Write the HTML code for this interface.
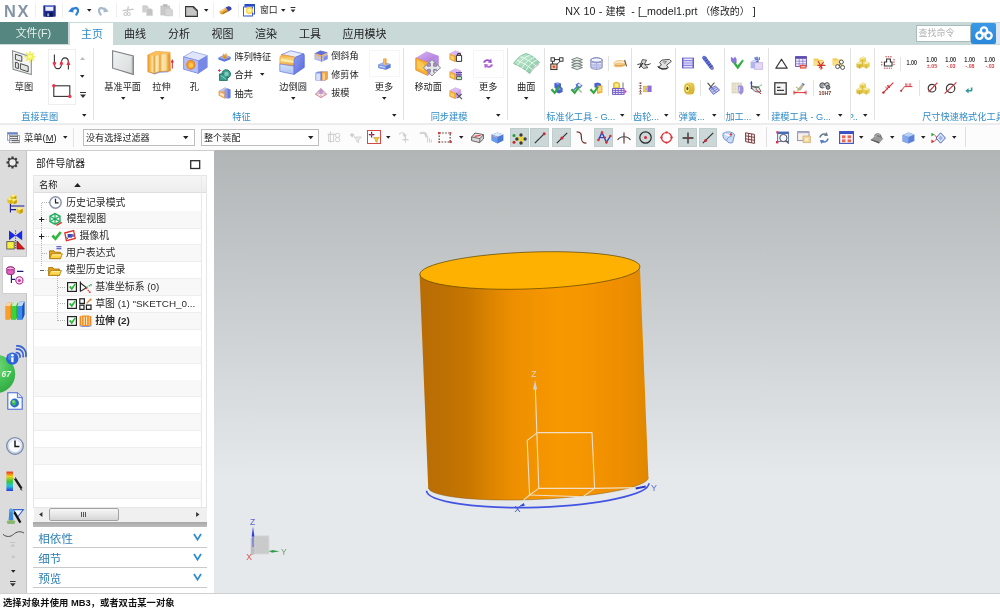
<!DOCTYPE html>
<html lang="zh"><head><meta charset="utf-8"><title>NX 10 - 建模 - [_model1.prt （修改的）]</title>
<style>
html,body{margin:0;padding:0;background:#fff;}
body{width:1000px;height:610px;position:relative;overflow:hidden;font-family:"Liberation Sans","Noto Sans CJK SC",sans-serif;}
#app{position:absolute;left:0;top:0;width:1000px;height:610px;overflow:hidden;will-change:transform;}
#app div,#app span.t,#app svg.i{position:absolute;}
span.t{line-height:14px;height:14px;white-space:nowrap;}
svg{overflow:visible}
span.cj{font-size:9.85px;word-spacing:0}
</style></head><body><svg width="0" height="0" style="position:absolute"><defs>
<linearGradient id="gPl" x1="0" y1="0" x2="1" y2="1"><stop offset="0" stop-color="#f2f4f4"/><stop offset="1" stop-color="#d5dad9"/></linearGradient>
<linearGradient id="gOr" x1="0" y1="0" x2="1" y2="0"><stop offset="0" stop-color="#f09a22"/><stop offset="0.5" stop-color="#fbd080"/><stop offset="1" stop-color="#ee9a28"/></linearGradient>
<linearGradient id="gExt" x1="0" y1="0" x2="1" y2="0"><stop offset="0" stop-color="#f0a030"/><stop offset="0.1" stop-color="#f6b850"/><stop offset="0.2" stop-color="#fbe2a0"/><stop offset="0.28" stop-color="#f4b04a"/><stop offset="0.38" stop-color="#fbe8b4"/><stop offset="0.48" stop-color="#f8d68c"/><stop offset="0.54" stop-color="#f0a840"/><stop offset="0.64" stop-color="#fbe6b0"/><stop offset="0.8" stop-color="#f8da94"/><stop offset="0.9" stop-color="#f0a234"/><stop offset="1" stop-color="#e89428"/></linearGradient>
<linearGradient id="gBlend" x1="0" y1="0" x2="0" y2="1"><stop offset="0" stop-color="#f4a440"/><stop offset="0.3" stop-color="#f8cc6a"/><stop offset="0.55" stop-color="#f8d478"/><stop offset="1" stop-color="#ee9230"/></linearGradient>
<linearGradient id="gBl3" x1="0" y1="0" x2="0" y2="1"><stop offset="0" stop-color="#d4e2fa"/><stop offset="1" stop-color="#a9c0f2"/></linearGradient>
<linearGradient id="gOrV" x1="0" y1="0" x2="0" y2="1"><stop offset="0" stop-color="#fbc35c"/><stop offset="1" stop-color="#ee8f1e"/></linearGradient>
<linearGradient id="gBl" x1="0" y1="0" x2="0" y2="1"><stop offset="0" stop-color="#cfd8fb"/><stop offset="1" stop-color="#8e9ff0"/></linearGradient>
<linearGradient id="gBl2" x1="0" y1="0" x2="1" y2="1"><stop offset="0" stop-color="#8d9cf2"/><stop offset="1" stop-color="#5868dc"/></linearGradient>
<linearGradient id="gPu" x1="0" y1="0" x2="1" y2="1"><stop offset="0" stop-color="#dcb6f2"/><stop offset="1" stop-color="#a66fd8"/></linearGradient>
<linearGradient id="gGr" x1="0" y1="0" x2="1" y2="1"><stop offset="0" stop-color="#c9ecd6"/><stop offset="1" stop-color="#7fc7a0"/></linearGradient>
<linearGradient id="gYe" x1="0" y1="0" x2="1" y2="1"><stop offset="0" stop-color="#f6e27a"/><stop offset="1" stop-color="#cfa91e"/></linearGradient>
<radialGradient id="gBadge" cx="0.45" cy="0.3" r="0.75"><stop offset="0" stop-color="#7fdc82"/><stop offset="0.55" stop-color="#44c254"/><stop offset="1" stop-color="#2fa640"/></radialGradient>
<linearGradient id="gClk" x1="0" y1="0" x2="0" y2="1"><stop offset="0" stop-color="#f4f8ff"/><stop offset="1" stop-color="#b9c9e6"/></linearGradient>
<linearGradient id="gRain" x1="0" y1="0" x2="0" y2="1"><stop offset="0" stop-color="#e8301e"/><stop offset="0.25" stop-color="#f2d21e"/><stop offset="0.5" stop-color="#3cc43c"/><stop offset="0.75" stop-color="#28c0d8"/><stop offset="1" stop-color="#2838d8"/></linearGradient>
</defs></svg><div id="app">
<div style="left:0px;top:0px;width:1000px;height:22px;background:#fff"></div>
<span class="t lat" style="left:4px;top:4.4px;font-size:16.4px;color:#8494a6;font-weight:bold;letter-spacing:1.6px">NX</span>
<svg class="i" style="left:43.1px;top:4.5px" width="13" height="12" viewBox="0 0 13 12"><rect x="0.3" y="0.3" width="12.4" height="11.4" rx="0.8" fill="#1f2f93"/><rect x="2.4" y="0.6" width="8" height="5.2" fill="#eef1fb"/><rect x="2.4" y="0.6" width="8" height="1.4" fill="#5b6fd0"/><rect x="3.2" y="7.6" width="6.6" height="4.1" fill="#0e1550"/><rect x="4.2" y="8.4" width="2" height="2.8" fill="#8fb0e8"/></svg>
<svg class="i" style="left:68.0px;top:6.300000000000001px" width="11" height="9" viewBox="0 0 11 9"><path d="M4 4.2 C5.4 1.8 9.2 1 10 3.8 C10.4 5.6 9.6 7.2 8.4 8.6" fill="none" stroke="#2f7fd8" stroke-width="2.3" stroke-linecap="round"/><path d="M0.2 5.6 L4.4 1 L5.6 6.4 Z" fill="#2f7fd8"/></svg>
<svg class="i" style="left:98.0px;top:6.300000000000001px" width="11" height="9" viewBox="0 0 11 9"><path d="M7 4.2 C5.6 1.8 1.8 1 1 3.8 C0.6 5.6 1.4 7.2 2.6 8.6" fill="none" stroke="#a9b9cb" stroke-width="2.3" stroke-linecap="round"/><path d="M10.8 5.6 L6.6 1 L5.4 6.4 Z" fill="#a9b9cb"/></svg>
<svg class="i" style="left:121.8px;top:5.5px" width="12" height="10" viewBox="0 0 12 10"><path d="M0.5 4.6 L11.5 3.2 M6.4 0.3 L5.2 6.2" stroke="#c9c9c9" stroke-width="1.4" fill="none"/><circle cx="3.4" cy="8" r="1.5" fill="none" stroke="#c9c9c9" stroke-width="1.1"/><circle cx="6.8" cy="8" r="1.5" fill="none" stroke="#c9c9c9" stroke-width="1.1"/></svg>
<svg class="i" style="left:142.0px;top:5.0px" width="11" height="11" viewBox="0 0 11 11"><path d="M0.3 0.3 H5 L6.6 1.9 V7.6 H0.3 Z" fill="#cfcfcf"/><path d="M4.4 3.4 H9 L10.7 5.1 V10.7 H4.4 Z" fill="#c3c3c3" stroke="#e2e2e2" stroke-width="0.5"/></svg>
<svg class="i" style="left:160.0px;top:4.0px" width="13" height="12" viewBox="0 0 13 12"><rect x="0.4" y="1.4" width="9.6" height="10.2" rx="0.8" fill="#c9c9c9"/><rect x="3" y="0.2" width="4.4" height="2.4" fill="#b9b9b9"/><path d="M5 4.2 H10.6 L12.6 6.2 V11.8 H5 Z" fill="#d5d5d5" stroke="#bdbdbd" stroke-width="0.5"/></svg>
<svg class="i" style="left:185.0px;top:5.699999999999999px" width="13" height="11" viewBox="0 0 13 11"><path d="M0.6 0.6 H8.4 L12.4 4.6 V10.4 H0.6 Z" fill="#c5c5c5" stroke="#333" stroke-width="1.1"/><path d="M8.2 0.8 C8.6 2.6 10 4.2 12.2 4.6" fill="none" stroke="#333" stroke-width="0.9"/></svg>
<svg class="i" style="left:218.8px;top:5.9px" width="13" height="9" viewBox="0 0 13 9"><path d="M0.4 5.6 L6.6 1.4 L9.6 5.4 L3.6 8.4 C2 9 0.6 7.4 0.4 5.6 Z" fill="#e9a437"/><path d="M6.6 1.4 L9.4 0.2 C11.2 -0.2 12.8 1.6 12.6 3.2 L9.6 5.4 Z" fill="#3a41b6"/><path d="M1.4 5.8 L6.4 2.6" stroke="#fbe3a0" stroke-width="1"/><path d="M3.8 7.4 L8.6 4.8" stroke="#8a5a18" stroke-width="0.8"/></svg>
<svg class="i" style="left:243.3px;top:4.0px" width="12" height="13" viewBox="0 0 12 13"><rect x="2" y="0.5" width="9.5" height="9.5" fill="#fff" stroke="#2b4bc4" stroke-width="1"/><rect x="2" y="0.5" width="9.5" height="2" fill="#2b4bc4"/><rect x="0.5" y="3" width="9" height="9" fill="#fff" stroke="#3b5bd0" stroke-width="1"/><circle cx="6.4" cy="6.6" r="3.6" fill="#ffd94a"/><circle cx="6.4" cy="6.4" r="2" fill="#fff3a8"/><rect x="3" y="11.4" width="5" height="1.3" fill="#8aa0d8"/></svg>
<svg class="i" style="left:87.25px;top:9.15px" width="4.5" height="2.6999999999999997" viewBox="0 0 10 6"><path d="M0 0H10L5 6Z" fill="#222"/></svg>
<svg class="i" style="left:204.15px;top:8.65px" width="4.5" height="2.6999999999999997" viewBox="0 0 10 6"><path d="M0 0H10L5 6Z" fill="#222"/></svg>
<svg class="i" style="left:281.35px;top:8.950000000000001px" width="4.5" height="2.6999999999999997" viewBox="0 0 10 6"><path d="M0 0H10L5 6Z" fill="#222"/></svg>
<div style="left:34.5px;top:3px;width:1px;height:15px;background:#efefef"></div>
<div style="left:61.5px;top:3px;width:1px;height:15px;background:#efefef"></div>
<div style="left:115.5px;top:3px;width:1px;height:15px;background:#efefef"></div>
<div style="left:179px;top:3px;width:1px;height:15px;background:#efefef"></div>
<div style="left:212.6px;top:3px;width:1px;height:15px;background:#efefef"></div>
<div style="left:238px;top:3px;width:1px;height:15px;background:#efefef"></div>
<span class="t " style="left:260px;top:3.3000000000000007px;font-size:8.8px;color:#222;">窗口</span>
<svg class="i" style="left:290px;top:7.4px" width="6" height="5.6" viewBox="0 0 6 7"><path d="M0 0H6V1.2H0Z M0 3H6L3 6.8Z" fill="#333"/></svg>
<span class="t " style="left:565.3px;top:3.5999999999999996px;font-size:10.7px;color:#222;word-spacing:0.4px">NX 10 - <span class="cj">建模</span><span style="margin-left:2.4px"> - [_model1.prt</span><span class="cj"> （修改的）</span> ]</span>
<div style="left:0px;top:22px;width:1000px;height:23px;background:#c9d9d8"></div>
<div style="left:0px;top:22.3px;width:68px;height:22.2px;background:#55867f"></div>
<div style="left:69.6px;top:23.4px;width:43.6px;height:21.6px;background:#fff"></div>
<span class="t " style="left:-66.5px;width:200px;text-align:center;top:26.299999999999997px;font-size:10.8px;color:#e4f1ee;">文件(F)</span>
<span class="t " style="left:-8px;width:200px;text-align:center;top:26.5px;font-size:11px;color:#2e8bc9;">主页</span>
<span class="t " style="left:35px;width:200px;text-align:center;top:26.5px;font-size:11px;color:#222;">曲线</span>
<span class="t " style="left:79px;width:200px;text-align:center;top:26.5px;font-size:11px;color:#222;">分析</span>
<span class="t " style="left:122.5px;width:200px;text-align:center;top:26.5px;font-size:11px;color:#222;">视图</span>
<span class="t " style="left:166px;width:200px;text-align:center;top:26.5px;font-size:11px;color:#222;">渲染</span>
<span class="t " style="left:210px;width:200px;text-align:center;top:26.5px;font-size:11px;color:#222;">工具</span>
<span class="t " style="left:264.5px;width:200px;text-align:center;top:26.5px;font-size:11px;color:#222;">应用模块</span>
<div style="left:915.5px;top:24.5px;width:55px;height:17px;background:#fff;border:1px solid #a9bcbc;box-sizing:border-box"></div>
<span class="t " style="left:918.5px;top:26.1px;font-size:9px;color:#b2b2b2;">查找命令</span>
<div style="left:996px;top:22.6px;width:4px;height:21px;background:#dde8f4"></div>
<div style="left:970.5px;top:22.6px;width:25.5px;height:21px;background:linear-gradient(180deg,#3a98e8,#2a88dc);border-radius:2px"></div>
<svg class="i" style="left:975.0px;top:25.799999999999997px" width="18" height="14" viewBox="0 0 18 14"><g fill="none" stroke="#fff" stroke-width="2.3"><circle cx="9" cy="4.6" r="3.2"/><circle cx="4.5" cy="9.6" r="3.2"/><circle cx="13.5" cy="9.6" r="3.2"/></g></svg>
<div style="left:0px;top:45px;width:1000px;height:78px;background:#fff"></div>
<div style="left:0px;top:122.6px;width:1000px;height:2px;background:#ececec"></div>
<div style="left:93px;top:48px;width:1px;height:72px;background:#e2e2e2"></div>
<div style="left:403px;top:48px;width:1px;height:72px;background:#e2e2e2"></div>
<div style="left:507px;top:48px;width:1px;height:72px;background:#e2e2e2"></div>
<div style="left:544px;top:48px;width:1px;height:72px;background:#e2e2e2"></div>
<div style="left:631px;top:48px;width:1px;height:72px;background:#e2e2e2"></div>
<div style="left:675px;top:48px;width:1px;height:72px;background:#e2e2e2"></div>
<div style="left:723.5px;top:48px;width:1px;height:72px;background:#e2e2e2"></div>
<div style="left:767.5px;top:48px;width:1px;height:72px;background:#e2e2e2"></div>
<div style="left:849.5px;top:48px;width:1px;height:72px;background:#e2e2e2"></div>
<div style="left:874px;top:48px;width:1px;height:72px;background:#e2e2e2"></div>
<svg class="i" style="left:12.100000000000001px;top:49.9px" width="25" height="25" viewBox="0 0 25 25"><path d="M0.5 0.8 L19.3 7 L19.3 24.6 L1.1 19.4 Z" fill="#f3f4f4" stroke="#8a8f92" stroke-width="1.1"/><path d="M3.4 4.2 L9.8 6.2 L9.8 11.4 L3.4 9.6 Z" fill="#e6e8e8" stroke="#4a4a4a" stroke-width="1"/><path d="M3.4 12.2 L6.4 13.2 L6.4 18.6 L3.4 17.6 Z" fill="#e6e8e8" stroke="#4a4a4a" stroke-width="1"/><path d="M8.4 13.6 L16.2 16.2 L16.2 21.8 L8.4 19.2 Z" fill="#e2e6e2" stroke="#4a4a4a" stroke-width="1"/><g stroke="#f1ec4a" stroke-width="1.3"><path d="M18 1 V12.6 M12.4 6.8 H23.6 M14 2.8 L22 10.8 M22 2.8 L14 10.8"/></g><circle cx="18" cy="6.8" r="3.3" fill="#eef04a"/><circle cx="18" cy="6.8" r="1.7" fill="#fbfbb0"/></svg>
<span class="t " style="left:-76px;width:200px;text-align:center;top:79.7px;font-size:9.2px;color:#222;">草图</span>
<div style="left:48px;top:49px;width:28px;height:56px;background:#fff;border:1px solid #eceef2;box-sizing:border-box"></div>
<svg class="i" style="left:52.2px;top:53.7px" width="19" height="16" viewBox="0 0 19 16"><path d="M2.4 0.4 V9.4 C2.4 16.4 9.4 16.4 9.4 9.4 V8.4 C9.4 2.4 16.4 2.4 16.4 8.4 V15.6" fill="none" stroke="#333" stroke-width="1.1"/><g fill="#e8354a"><path d="M2.4 13 L0.4 8.6 H4.4 Z"/><path d="M9.4 6 L7.4 10.6 H11.4 Z"/><path d="M16.4 6.4 L14.4 11 H18.4 Z"/><circle cx="2.4" cy="9" r="1.3"/><circle cx="9.4" cy="9.6" r="1.3"/><circle cx="16.4" cy="10" r="1.3"/></g></svg>
<svg class="i" style="left:51.8px;top:83.8px" width="20" height="14" viewBox="0 0 20 14"><rect x="1.8" y="1.8" width="16" height="10.6" fill="none" stroke="#333" stroke-width="1.1"/><circle cx="1.8" cy="1.8" r="1.7" fill="#e8354a"/><circle cx="17.8" cy="12.4" r="1.7" fill="#e8354a"/></svg>
<svg class="i" style="left:80.2px;top:57px" width="5" height="3" viewBox="0 0 10 6"><path d="M0 6H10L5 0Z" fill="#bbb"/></svg>
<svg class="i" style="left:80.45px;top:74.95px" width="4.5" height="2.6999999999999997" viewBox="0 0 10 6"><path d="M0 0H10L5 6Z" fill="#222"/></svg>
<svg class="i" style="left:79.8px;top:91.5px" width="6" height="6" viewBox="0 0 6 6"><path d="M0 0H6V1H0Z M0 2.5H6L3 6Z" fill="#333"/></svg>
<span class="t " style="left:-60.3px;width:200px;text-align:center;top:109.7px;font-size:9.2px;color:#2e8bc9;">直接草图</span>
<svg class="i" style="left:81.75px;top:114.25px" width="4.5" height="2.6999999999999997" viewBox="0 0 10 6"><path d="M0 0H10L5 6Z" fill="#222"/></svg>
<svg class="i" style="left:112.4px;top:50.4px" width="22" height="25" viewBox="0 0 22 25"><path d="M0.6 0.8 L21.4 6 L21.4 24.4 L0.6 18.2 Z" fill="url(#gPl)" stroke="#7d8284" stroke-width="1.1"/><path d="M20.4 6.6 V23" stroke="#a8adaf" stroke-width="1.4"/></svg>
<span class="t " style="left:22.700000000000003px;width:200px;text-align:center;top:79.7px;font-size:9.2px;color:#222;">基准平面</span>
<svg class="i" style="left:120.65px;top:97.05000000000001px" width="4.5" height="2.6999999999999997" viewBox="0 0 10 6"><path d="M0 0H10L5 6Z" fill="#222"/></svg>
<svg class="i" style="left:147.4px;top:51.2px" width="27" height="23" viewBox="0 0 27 23"><path d="M2.6 21.4 L7.6 23.5 L12.6 21.8 L21.6 21.2 V19 H2.6 Z" fill="#8b9bea"/><path d="M0.9 4 L8.7 0.6 L23 1.3 L23.4 20 L12.1 20.6 L7.4 22.4 L0.9 20.8 Z" fill="url(#gExt)" stroke="#dc8e2c" stroke-width="0.7" stroke-linejoin="round"/><path d="M0.9 4 L8.7 0.6 L23 1.3 L23.2 2.8 L12.8 3.8 L7.4 5.2 Z" fill="#f7bd58" opacity="0.9"/><path d="M7.4 5.2 V22.2 M12.8 3.8 V20.6" stroke="#e09a3a" stroke-width="0.6"/><path d="M25.3 17.6 V10.4" stroke="#cc2a3c" stroke-width="1"/><path d="M25.3 8 L23.7 11.4 H26.9 Z" fill="#cc2a3c"/></svg>
<span class="t " style="left:61.400000000000006px;width:200px;text-align:center;top:79.7px;font-size:9.2px;color:#222;">拉伸</span>
<svg class="i" style="left:159.65px;top:97.05000000000001px" width="4.5" height="2.6999999999999997" viewBox="0 0 10 6"><path d="M0 0H10L5 6Z" fill="#222"/></svg>
<svg class="i" style="left:182.8px;top:51.0px" width="25" height="23" viewBox="0 0 25 23"><path d="M0.6 5.8 L9.6 0.6 L24.4 4.6 L24.4 16.6 L15.4 22.4 L0.6 18.2 Z" fill="#8494ea"/><path d="M0.6 5.8 L9.6 0.6 L24.4 4.6 L15.4 9.8 Z" fill="#dfe6fc" stroke="#8a9aea" stroke-width="0.6"/><path d="M15.4 9.8 L24.4 4.6 V16.6 L15.4 22.4 Z" fill="#7888e6"/><path d="M0.6 5.8 L15.4 9.8 V22.4 L0.6 18.2 Z" fill="#b2bef6" stroke="#7585e0" stroke-width="0.7"/><ellipse cx="7.8" cy="13.8" rx="4" ry="4.3" fill="#f6a22a" stroke="#e87e24" stroke-width="1.1"/><ellipse cx="8" cy="14.2" rx="2.2" ry="2.5" fill="#fbc84a"/></svg>
<span class="t " style="left:94.4px;width:200px;text-align:center;top:79.7px;font-size:9.2px;color:#222;">孔</span>
<svg class="i" style="left:217.5px;top:51.8px" width="13" height="10" viewBox="0 0 13 10"><path d="M0.4 5.6 L6.6 2.8 L12.6 5 V7.2 L6.4 9.8 L0.4 7.6 Z" fill="#5c7ad8"/><path d="M0.4 5.6 L6.6 2.8 L12.6 5 L6.4 7.6 Z" fill="#9ab0ee"/><path d="M4 5.4 L5.6 1 L7.4 5.6 Z" fill="#f09a2a"/><path d="M6.4 4.6 L8 0.4 L10 4.8 Z" fill="#f6b44a"/><path d="M5.4 6.6 L7 2.6 L9 6.8 Z" fill="#e88a1e"/></svg>
<span class="t " style="left:234.5px;top:49.6px;font-size:9.2px;color:#222;">阵列特征</span>
<svg class="i" style="left:217.7px;top:68.8px" width="13" height="12" viewBox="0 0 13 12"><circle cx="8.2" cy="5" r="4.3" fill="#3ea292" stroke="#1f6f62" stroke-width="0.9"/><rect x="1.6" y="5" width="7.6" height="6.4" fill="#3aa090" stroke="#1f6f62" stroke-width="0.9"/><circle cx="8.4" cy="5" r="2.2" fill="#7fcabc"/><path d="M3 6.6 L7.6 10" stroke="#8fd6c8" stroke-width="0.9"/><path d="M1.4 0 V3 M0 1.5 H2.8" stroke="#e02848" stroke-width="0.9"/></svg>
<span class="t " style="left:234.5px;top:67.9px;font-size:9.2px;color:#222;">合并</span>
<svg class="i" style="left:259.55px;top:73.25px" width="4.5" height="2.6999999999999997" viewBox="0 0 10 6"><path d="M0 0H10L5 6Z" fill="#222"/></svg>
<svg class="i" style="left:217.9px;top:86.8px" width="13" height="12" viewBox="0 0 13 12"><path d="M0.6 4 L6.8 0.6 L10 1.6 V10.4 L6.2 11.6 L0.6 8.6 Z" fill="#f0a24a"/><path d="M0.6 4 L6.8 0.6 L10 1.6 L4 4.8 Z" fill="#b9c4f2"/><path d="M2 5.4 L6 7 V10 L2 8 Z" fill="#fbe3c0"/><path d="M9.2 1.2 L12.6 2.4 V11 L9.2 11.8 Z" fill="#6a7ce0"/><path d="M6.6 2.6 L9.4 1.6 V11 L6.6 11.4 Z" fill="#8e9cec"/></svg>
<span class="t " style="left:234.5px;top:86.5px;font-size:9.2px;color:#222;">抽壳</span>
<svg class="i" style="left:279.3px;top:50.4px" width="26" height="25" viewBox="0 0 26 25"><path d="M2.4 4.6 L11.7 0.8 L24.6 3.8 L16.6 7.4 Z" fill="#e6ecfc" stroke="#6a7ae0" stroke-width="0.7" stroke-linejoin="round"/><path d="M0.8 8.4 C0.9 5.8 2.4 4.5 4.6 4.8 L17.2 7.4 C15.8 8 15.2 9 15.1 10.6 V16.2 L0.8 14 Z" fill="url(#gBlend)" stroke="#e8903a" stroke-width="0.5"/><path d="M0.8 14 L15.1 16.2 V24.4 L0.8 21.4 Z" fill="url(#gBl3)" stroke="#6a7ae0" stroke-width="0.7" stroke-linejoin="round"/><path d="M15.1 10.6 C15.2 8.4 16.4 7.4 17.8 6.8 L24.6 3.8 C25.2 4.2 25.3 5 25.3 5.8 V17.4 L15.1 24.4 Z" fill="url(#gBl2)" stroke="#5868d8" stroke-width="0.7" stroke-linejoin="round"/><path d="M2 9.6 L14.4 12" stroke="#fbf6b8" stroke-width="2.2" opacity="0.85"/></svg>
<span class="t " style="left:193.10000000000002px;width:200px;text-align:center;top:79.7px;font-size:9.2px;color:#222;">边倒圆</span>
<svg class="i" style="left:291.25px;top:97.05000000000001px" width="4.5" height="2.6999999999999997" viewBox="0 0 10 6"><path d="M0 0H10L5 6Z" fill="#222"/></svg>
<svg class="i" style="left:313.7px;top:49.8px" width="14" height="12" viewBox="0 0 14 12"><path d="M0.4 3.4 L6.4 0.4 L13.6 2.6 V9 L7.6 11.8 L0.4 9.6 Z" fill="#aebdf4"/><path d="M0.4 3.4 L6.4 0.4 L13.6 2.6 L7.6 5.6 Z" fill="#5e6fd8"/><path d="M1.4 4 L7.4 6.2 L12.4 3.6" fill="none" stroke="#f4b062" stroke-width="1.6"/><path d="M0.6 6.6 L7.6 8.8 L13.4 6" fill="none" stroke="#f6c08a" stroke-width="1.3"/><path d="M7.6 5.6 V11.8" stroke="#5e6fd8" stroke-width="0.8"/><path d="M9.6 7 L13.6 5 V9 L9.6 11 Z" fill="#7d8fe8"/></svg>
<span class="t " style="left:331.2px;top:49.3px;font-size:9.2px;color:#222;">倒斜角</span>
<svg class="i" style="left:315.1px;top:70.5px" width="13" height="10" viewBox="0 0 13 10"><path d="M0.4 1.8 L3 0.4 H12.6 V8 L10.4 9.6 H0.4 Z" fill="#7c8ee8"/><rect x="1.2" y="2.4" width="4.4" height="6.6" fill="#d9e2fb"/><path d="M6.2 0.6 H12.6 V8 L10.6 9.6 H6.2 Z" fill="#f0a24a"/><rect x="7.6" y="2.2" width="2.4" height="6.6" fill="#fbd28a"/><path d="M6.2 0.4 V9.6" stroke="#5a6ad6" stroke-width="0.9"/></svg>
<span class="t " style="left:331.2px;top:67.9px;font-size:9.2px;color:#222;">修剪体</span>
<svg class="i" style="left:315.4px;top:87.8px" width="12" height="10" viewBox="0 0 12 10"><path d="M6 0.6 L11.6 6.2 L6 9.6 L0.4 6.2 Z" fill="#f3eef4" stroke="#d8747a" stroke-width="0.9"/><path d="M6 0.6 L9.4 4 L6 5.4 L2.6 4 Z" fill="#b79ae0"/><path d="M6 0.6 V9.6 M0.6 6.2 L6 5.2 L11.4 6.2" stroke="#c98a9e" stroke-width="0.7" fill="none"/></svg>
<span class="t " style="left:331.2px;top:86.3px;font-size:9.2px;color:#222;">拔模</span>
<div style="left:368.5px;top:50px;width:31px;height:27px;background:#fff;border:1px solid #f5f5f7;box-sizing:border-box"></div>
<svg class="i" style="left:377.5px;top:57.9px" width="13" height="12" viewBox="0 0 13 12"><path d="M0.4 6.4 L5 4.4 L12.6 6 V9.8 L8 11.8 L0.4 10 Z" fill="#5b78d6"/><path d="M0.4 6.4 L5 4.4 L12.6 6 L8 8 Z" fill="#9db4f0"/><path d="M0.4 6.4 L8 8 V11.8 L0.4 10 Z" fill="#7e98e6"/><path d="M1.6 8.2 L6.8 9.4" stroke="#dfe8fb" stroke-width="0.9"/><path d="M5 0.8 L7.6 0.2 L8.6 0.8 V6.4 L6.2 7 L5 6.2 Z" fill="#f0a23a"/><path d="M6.2 1.4 V7" stroke="#fbd48a" stroke-width="0.8"/></svg>
<span class="t " style="left:283.9px;width:200px;text-align:center;top:79.7px;font-size:9.2px;color:#222;">更多</span>
<svg class="i" style="left:382.05px;top:97.05000000000001px" width="4.5" height="2.6999999999999997" viewBox="0 0 10 6"><path d="M0 0H10L5 6Z" fill="#222"/></svg>
<span class="t " style="left:141.5px;width:200px;text-align:center;top:109.7px;font-size:9.2px;color:#2e8bc9;">特征</span>
<svg class="i" style="left:392.35px;top:114.25px" width="4.5" height="2.6999999999999997" viewBox="0 0 10 6"><path d="M0 0H10L5 6Z" fill="#222"/></svg>
<svg class="i" style="left:415.1px;top:50.5px" width="26" height="25" viewBox="0 0 26 25"><path d="M0.8 7 L11.6 0.6 L23.6 5 L23.6 17.6 L12.6 24.4 L0.8 19 Z" fill="#c59ae8"/><path d="M0.8 7 L11.6 0.6 L23.6 5 L12.6 11.4 Z" fill="url(#gPu)"/><path d="M0.8 7 L12.6 11.4 V24.4 L0.8 19 Z" fill="#f5b233" stroke="#e8902a" stroke-width="0.8"/><path d="M2 9 L9 13 V20 L2 17 Z" fill="#fbd36a" opacity="0.7"/><path d="M12.6 11.4 L23.6 5 V17.6 L12.6 24.4 Z" fill="#b88ae0"/><path d="M17 8.6 L20.6 12.4 H18.6 V15.2 H21.6 V13.2 L25.6 16.8 L21.6 20.4 V18.4 H18.6 V21.2 H20.6 L17 25 L13.4 21.2 H15.4 V18.4 H12.4 V20.4 L8.4 16.8 L12.4 13.2 V15.2 H15.4 V12.4 H13.4 Z" fill="#e6e8ea" stroke="#7d8287" stroke-width="0.9"/></svg>
<span class="t " style="left:328.2px;width:200px;text-align:center;top:79.7px;font-size:9.2px;color:#222;">移动面</span>
<svg class="i" style="left:449.0px;top:49.7px" width="14" height="13" viewBox="0 0 14 13"><path d="M0.6 3.6 L6.4 0.6 L12 2.6 V9 L6.2 12 L0.6 9.6 Z" fill="#c9a0ea"/><path d="M0.6 3.6 L6.4 0.6 L12 2.6 L6.2 5.8 Z" fill="#d9b8f2"/><path d="M0.6 3.6 L6.2 5.8 V12 L0.6 9.6 Z" fill="#f3aa35"/><path d="M1.6 5.4 L5 6.8 V10.2 L1.6 8.8 Z" fill="#fbcf6a"/><path d="M7.4 5.4 H12.6 V11.4 H7.4 Z" fill="#fff" stroke="#333" stroke-width="1"/><path d="M8.6 5.4 V3.6 H11.4 V5.4" fill="none" stroke="#333" stroke-width="1"/></svg>
<svg class="i" style="left:449.0px;top:68.2px" width="14" height="13" viewBox="0 0 14 13"><path d="M0.6 3.6 L6.4 0.6 L12 2.6 V9 L6.2 12 L0.6 9.6 Z" fill="#c9a0ea"/><path d="M0.6 3.6 L6.4 0.6 L12 2.6 L6.2 5.8 Z" fill="#d9b8f2"/><path d="M0.6 3.6 L6.2 5.8 V12 L0.6 9.6 Z" fill="#f3aa35"/><path d="M1.6 5.4 L5 6.8 V10.2 L1.6 8.8 Z" fill="#fbcf6a"/><path d="M7 4.6 H13 M7 6.8 H13" stroke="#5a4a9a" stroke-width="1.2"/><path d="M7.6 8.6 H12.6 V11.6 H7.6 Z" fill="#cfe6d6" stroke="#3a5a44" stroke-width="0.9"/></svg>
<svg class="i" style="left:449.0px;top:86.5px" width="14" height="13" viewBox="0 0 14 13"><path d="M0.6 3.6 L6.4 0.6 L12 2.6 V9 L6.2 12 L0.6 9.6 Z" fill="#c9a0ea"/><path d="M0.6 3.6 L6.4 0.6 L12 2.6 L6.2 5.8 Z" fill="#d9b8f2"/><path d="M0.6 3.6 L6.2 5.8 V12 L0.6 9.6 Z" fill="#f3aa35"/><path d="M1.6 5.4 L5 6.8 V10.2 L1.6 8.8 Z" fill="#fbcf6a"/><path d="M7.2 6.4 L13 12.2 M12.6 7 L8.4 11" stroke="#555" stroke-width="1.2"/></svg>
<div style="left:472.8px;top:49.5px;width:31px;height:28px;background:#fff;border:1px solid #f5f5f7;box-sizing:border-box"></div>
<svg class="i" style="left:482.4px;top:58.0px" width="12" height="11" viewBox="0 0 12 11"><path d="M1 4.6 C1.6 1.6 5.4 0.2 8 2 L9.2 0.6 L9.8 5 L5.6 4.6 L6.8 3.4 C5.4 2.6 3.6 3.2 3.2 4.8 Z" fill="#a04ed0"/><path d="M11 6.4 C10.4 9.4 6.6 10.8 4 9 L2.8 10.4 L2.2 6 L6.4 6.4 L5.2 7.6 C6.6 8.4 8.4 7.8 8.8 6.2 Z" fill="#b264dc"/></svg>
<span class="t " style="left:388.3px;width:200px;text-align:center;top:79.7px;font-size:9.2px;color:#222;">更多</span>
<svg class="i" style="left:486.25px;top:97.05000000000001px" width="4.5" height="2.6999999999999997" viewBox="0 0 10 6"><path d="M0 0H10L5 6Z" fill="#222"/></svg>
<span class="t " style="left:349px;width:200px;text-align:center;top:109.7px;font-size:9.2px;color:#2e8bc9;">同步建模</span>
<svg class="i" style="left:496.35px;top:114.25px" width="4.5" height="2.6999999999999997" viewBox="0 0 10 6"><path d="M0 0H10L5 6Z" fill="#222"/></svg>
<svg class="i" style="left:512.5px;top:52.5px" width="27" height="21" viewBox="0 0 27 21"><path d="M0.6 10.6 C4 5 8.4 1.6 13.4 0.6 C18.6 2.4 23 5.6 26.4 9.6 C22 12 18.6 15.6 16.6 20.4 C11 15.6 5.6 12.6 0.6 10.6 Z" fill="url(#gGr)" stroke="#6fb892" stroke-width="0.8"/><path d="M16.6 20.4 C18.6 15.6 22 12 26.4 9.6 L26 12 C22.6 14 19.6 17 17.4 21 Z" fill="#c9cfcd"/><g fill="none" stroke="#f4fbf6" stroke-width="0.9"><path d="M3.8 7.2 C9 9.2 15 12.6 19.4 16.6"/><path d="M7.4 3.8 C12.6 5.6 18.6 9 23 13"/><path d="M4.6 12.4 C8 7 12.4 3.6 17.2 2.4"/><path d="M9 15 C12 9.6 16.4 6 21.2 4.6"/><path d="M12.8 17.6 C15.6 12.4 19.6 8.8 24 7"/></g></svg>
<span class="t " style="left:426.29999999999995px;width:200px;text-align:center;top:79.7px;font-size:9.2px;color:#222;">曲面</span>
<svg class="i" style="left:524.05px;top:97.05000000000001px" width="4.5" height="2.6999999999999997" viewBox="0 0 10 6"><path d="M0 0H10L5 6Z" fill="#222"/></svg>
<svg class="i" style="left:550.3px;top:56.5px" width="14" height="13" viewBox="0 0 14 13"><path d="M3 2.6 H11 M2.6 3 V10.4 M11.4 3 L4.6 9.6" stroke="#333" stroke-width="1"/><rect x="1" y="0.8" width="3.4" height="3.4" fill="#fff" stroke="#222" stroke-width="0.9"/><rect x="9.6" y="0.8" width="3.4" height="3.4" fill="#fff" stroke="#222" stroke-width="0.9"/><rect x="0.8" y="7" width="6.2" height="5.6" fill="#f2c4a4" stroke="#222" stroke-width="0.9"/><circle cx="3.9" cy="9.8" r="1.3" fill="#e84a2a"/></svg>
<svg class="i" style="left:570.5px;top:56.5px" width="12" height="13" viewBox="0 0 12 13"><g fill="#e6ebe8" stroke="#5a6a62" stroke-width="0.8"><path d="M6 0.6 L11.4 2.6 L6 4.6 L0.6 2.6 Z"/><path d="M6 3.4 L11.4 5.4 L6 7.4 L0.6 5.4 Z"/><path d="M6 6.2 L11.4 8.2 L6 10.2 L0.6 8.2 Z"/><path d="M6 8.8 L11.4 10.6 L6 12.6 L0.6 10.6 Z"/></g></svg>
<svg class="i" style="left:589.7px;top:56.5px" width="13" height="13" viewBox="0 0 13 13"><path d="M0.8 3 C0.8 0.2 12.2 0.2 12.2 3 V10.2 C12.2 13 0.8 13 0.8 10.2 Z" fill="#e4e6f6" stroke="#6a72b0" stroke-width="0.8"/><ellipse cx="6.5" cy="3" rx="5.7" ry="2.1" fill="#f4f4fb" stroke="#6a72b0" stroke-width="0.8"/><path d="M1 5.6 H12 M1 8 H12 M1 10.2 H12 M6.5 5.4 V12.4" stroke="#8a90c8" stroke-width="0.8"/><rect x="4.4" y="6.6" width="4" height="4.6" fill="#b9bfee" opacity="0.8"/></svg>
<svg class="i" style="left:612.8px;top:59.0px" width="14" height="9" viewBox="0 0 14 9"><path d="M0.6 3.4 C3 0.6 7.6 0.2 12.2 2 L13 6.4 C9 8.6 4 9 0.8 7.4 Z" fill="#f2c888"/><path d="M1.6 4 C4 2.6 8 2.6 11.4 3.6" stroke="#fff" stroke-width="1" fill="none"/><path d="M2 6.2 C5 7.4 9 7 12 5.6" stroke="#d9963a" stroke-width="0.9" fill="none"/><path d="M11.6 1 L13.6 7.4" stroke="#5a5a5a" stroke-width="1.1"/></svg>
<svg class="i" style="left:550.0px;top:81.8px" width="13" height="13" viewBox="0 0 13 13"><path d="M4.4 1 L8 0.4 L11 1.6 V5 L12.6 6 V10 L9 11.4 L5.6 10 V6.4 L4.4 5.6 Z" fill="#4a62d0"/><path d="M5.4 1.6 L8 1.2 L10 2 L7.6 2.8 Z" fill="#9ab0f2"/><path d="M7 6.8 L9.4 6.2 L11.6 7 L9.2 8 Z" fill="#8aa0ee"/><path d="M0.6 8 L2.4 6.6 L4.6 9.2 L8.2 4 L9.8 5.2 L4.8 12.6 Z" fill="#2fa83c"/></svg>
<svg class="i" style="left:569.7px;top:81.8px" width="13" height="13" viewBox="0 0 13 13"><path d="M5.6 2.6 L8.6 0.4 L12.6 3.6 L10 6.4 L7.4 5.6 L3.4 9.6 L2.4 8.6 L6.2 4.6 Z" fill="#5a78d8"/><circle cx="9.4" cy="3" r="1.5" fill="#e6ecfb"/><path d="M7.4 6 L11.6 10.4" stroke="#9ac49a" stroke-width="1.5"/><path d="M0.6 8 L2.4 6.6 L4.6 9.2 L8.2 4 L9.8 5.2 L4.8 12.6 Z" fill="#2fa83c"/></svg>
<svg class="i" style="left:588.9px;top:81.8px" width="14" height="13" viewBox="0 0 14 13"><path d="M5.4 1.2 L9 0.6 L12 1.8 V5.2 L9 6.4 L5.4 5.2 Z" fill="#4a62d0"/><path d="M8 3.6 H13.4 V10.4 L10.4 11.6 H8 Z" fill="#f0a830"/><path d="M9 4.6 H12.4 V9.6 H9 Z" fill="#fbd67a"/><path d="M0.6 8 L2.4 6.6 L4.6 9.2 L8.2 4 L9.8 5.2 L4.8 12.6 Z" fill="#2fa83c"/></svg>
<svg class="i" style="left:612.3px;top:81.8px" width="15" height="13" viewBox="0 0 15 13"><path d="M1.6 1.4 C3 -0.4 6.6 -0.2 7.6 1.8 V6.4 H1.6 Z" fill="#f2d04a" stroke="#c09a1e" stroke-width="0.6"/><circle cx="4.6" cy="3.4" r="1.6" fill="#fbeea0"/><path d="M10.4 0.6 L11.6 0.4 V7 H10.4 Z" fill="#8a8a8a"/><rect x="0.6" y="6.6" width="11.4" height="5.8" fill="#efeafc" stroke="#6a4fc0" stroke-width="0.9"/><path d="M0.6 8.6 H12 M0.6 10.5 H12 M3.4 6.6 V12.4 M6.2 6.6 V12.4 M9.2 6.6 V12.4" stroke="#6a4fc0" stroke-width="0.8"/><path d="M12.4 7.4 L14.8 9.6 L12.4 11.8 Z" fill="#c43ad0"/></svg>
<div style="left:608px;top:56px;width:1px;height:15px;background:#e3e3e3"></div>
<div style="left:608px;top:80px;width:1px;height:16px;background:#e3e3e3"></div>
<span class="t " style="left:546.3px;top:109.7px;font-size:9.2px;color:#2e8bc9;">标准化工具 - G...</span>
<svg class="i" style="left:619.75px;top:114.25px" width="4.5" height="2.6999999999999997" viewBox="0 0 10 6"><path d="M0 0H10L5 6Z" fill="#222"/></svg>
<svg class="i" style="left:637.0px;top:59.0px" width="14" height="10" viewBox="0 0 14 10"><path d="M0.4 5.6 C3 4.6 5.6 4.6 8 5.4 C10 6 12 5.6 13.6 4.6" stroke="#333" stroke-width="1" fill="none"/><path d="M5.4 0.6 L9.6 1.2 L7.4 5.2 L11 8.6 L6.4 9.4 L3.4 6.2 Z" fill="#d9d9d9" stroke="#444" stroke-width="0.9"/><path d="M2.2 9 L6 4" stroke="#222" stroke-width="1.2"/></svg>
<svg class="i" style="left:656.5px;top:58.5px" width="15" height="11" viewBox="0 0 15 11"><path d="M5 1 L12.4 0.4 L14.4 2.4 L9.6 6.2 L11.4 8.6 L5.4 10.4 L1 8.4 L4.4 6 L2.6 3.4 Z" fill="#e0e0e0" stroke="#444" stroke-width="0.9"/><path d="M0.6 7.4 C3 9.6 7 10.4 10.4 9.4" stroke="#333" stroke-width="1.1" fill="none"/><path d="M5.6 3 L9.4 2.6 L7.4 5" stroke="#777" stroke-width="0.9" fill="none"/></svg>
<svg class="i" style="left:638.0px;top:81.8px" width="14" height="13" viewBox="0 0 14 13"><path d="M2.4 0.6 V12.4" stroke="#333" stroke-width="1" stroke-dasharray="1.4 1"/><path d="M0.8 1 H4 M0.8 3.8 H4 M0.8 6.6 H4 M0.8 9.4 H4 M0.8 12 H4" stroke="#d05a5a" stroke-width="0.7"/><rect x="5.6" y="4.2" width="6" height="5.6" fill="#f2d24a" stroke="#c8a82a" stroke-width="0.6"/><rect x="9.6" y="3.6" width="4" height="6.4" fill="#8a6fd8"/><rect x="7.4" y="5.6" width="2.6" height="2.8" fill="#b9a2ee"/></svg>
<span class="t " style="left:633px;top:109.7px;font-size:9.2px;color:#2e8bc9;">齿轮...</span>
<svg class="i" style="left:663.75px;top:114.25px" width="4.5" height="2.6999999999999997" viewBox="0 0 10 6"><path d="M0 0H10L5 6Z" fill="#222"/></svg>
<svg class="i" style="left:682.3px;top:57.4px" width="12" height="12" viewBox="0 0 12 12"><rect x="0.6" y="0.4" width="10.8" height="11.2" rx="1" fill="#8f88e0"/><path d="M1.6 2.4 H10.4 M1.6 4.8 H10.4 M1.6 7.2 H10.4 M1.6 9.6 H10.4" stroke="#e9e6fb" stroke-width="1.2"/><path d="M0.6 0.6 V11.4 M11.4 0.6 V11.4" stroke="#4a44b0" stroke-width="0.9"/></svg>
<svg class="i" style="left:702.3px;top:55.7px" width="12" height="14" viewBox="0 0 12 14"><path d="M2.4 2 L9.6 11.6" stroke="#6a78d8" stroke-width="4" stroke-linecap="round"/><path d="M1.6 3.4 L4.6 1.6 M3 5.4 L6 3.6 M4.6 7.4 L7.6 5.6 M6 9.4 L9 7.6 M7.6 11.4 L10.6 9.6" stroke="#2a3a9a" stroke-width="0.9"/><circle cx="2" cy="1.6" r="1.4" fill="none" stroke="#5a68c8" stroke-width="0.9"/><circle cx="10.4" cy="12.4" r="1.2" fill="none" stroke="#888" stroke-width="0.9"/></svg>
<svg class="i" style="left:682.6px;top:81.8px" width="12" height="13" viewBox="0 0 12 13"><path d="M2 1.6 C4 0.2 9 0.2 10.6 1.6 C12 4 12 9 10.6 11.4 C9 12.8 4 12.8 2 11.4 C0.4 9 0.4 4 2 1.6 Z" fill="url(#gYe)"/><ellipse cx="4.4" cy="6.5" rx="2.6" ry="4" fill="#f7e88a" stroke="#b8961e" stroke-width="0.7"/><ellipse cx="4.4" cy="6.5" rx="1" ry="1.8" fill="#5a4a10"/></svg>
<svg class="i" style="left:705.6px;top:82.0px" width="14" height="13" viewBox="0 0 14 13"><path d="M1.6 0.8 L8.6 9" stroke="#444" stroke-width="1.1"/><path d="M8.4 0.6 L3 7" stroke="#555" stroke-width="1.1"/><path d="M3 7 L9.4 4 L13.6 8 L7.4 12.4 Z" fill="#c9cdf4" stroke="#5a62c0" stroke-width="0.9"/><path d="M5 8 L10.4 5.4 M6.4 10 L12 6.6 M6 6 L10 10.6" stroke="#5a62c0" stroke-width="0.7"/></svg>
<div style="left:700.4px;top:80px;width:1px;height:16px;background:#e3e3e3"></div>
<span class="t " style="left:678.8px;top:109.7px;font-size:9.2px;color:#2e8bc9;">弹簧...</span>
<svg class="i" style="left:712.35px;top:114.25px" width="4.5" height="2.6999999999999997" viewBox="0 0 10 6"><path d="M0 0H10L5 6Z" fill="#222"/></svg>
<svg class="i" style="left:729.5px;top:55.7px" width="14" height="14" viewBox="0 0 14 14"><path d="M0.8 0.8 L3.6 2.6 L5 0.6 L6.6 3 L6.6 7 L3 7.6 L1 5 Z" fill="#8a7ad8"/><path d="M3.4 7.4 L5.4 6 L7.6 9.4 L12.4 3.4 L13.8 4.8 L7.8 13.4 Z" fill="#2fae3e"/></svg>
<svg class="i" style="left:750.0px;top:55.7px" width="13" height="14" viewBox="0 0 13 14"><path d="M4 1.6 L7.6 0.4 L8.6 3 L5 4 Z" fill="#7a8ad8"/><rect x="5.6" y="3" width="3" height="4" fill="#5f70d0"/><path d="M0.6 5.6 H6 V12.4 H0.6 Z" fill="#aeb6ee"/><path d="M4.6 6.6 H12.6 V13.4 H4.6 Z" fill="#e3d9f6" stroke="#b9a8e6" stroke-width="0.7"/><path d="M0.6 5.6 L3 4 H8 L6 5.6 Z" fill="#c9d0f6"/><path d="M9.4 1 V4" stroke="#4a9a5a" stroke-width="1"/></svg>
<svg class="i" style="left:730.7px;top:82.0px" width="13" height="13" viewBox="0 0 13 13"><rect x="0.6" y="0.6" width="10.4" height="10.8" fill="#d8d4c4"/><path d="M0.6 3.2 H11 M0.6 5.8 H11 M0.6 8.4 H11 M3.2 0.6 V11.4 M5.8 0.6 V11.4 M8.4 0.6 V11.4" stroke="#f2ecd0" stroke-width="0.8"/><path d="M7 3.4 H11.4 L12.6 6 L12.4 10 L10 13 L7.6 10 Z" fill="#9a8fe0"/><path d="M8.6 5 V9.4" stroke="#d9d2f6" stroke-width="1"/></svg>
<svg class="i" style="left:749.9px;top:81.3px" width="13" height="14" viewBox="0 0 13 14"><path d="M1.4 0.6 V8" stroke="#2a3ad0" stroke-width="1.1"/><path d="M1.4 0 L0.2 2.4 H2.6 Z" fill="#2a3ad0"/><path d="M1.4 5 C2 9.6 6 12 11 10.6 L8.6 6 C6 7 3.6 6.6 1.4 5 Z" fill="#e2e4ea" stroke="#555" stroke-width="0.9"/><path d="M6 7.4 L12.4 3.4" stroke="#3a9a4a" stroke-width="1" stroke-dasharray="1.6 1"/><path d="M5.6 8 L11 13" stroke="#d02a2a" stroke-width="1"/><path d="M1.4 5 L8.6 6" stroke="#555" stroke-width="0.8"/></svg>
<span class="t " style="left:725.4px;top:109.7px;font-size:9.2px;color:#2e8bc9;">加工...</span>
<svg class="i" style="left:755.85px;top:114.25px" width="4.5" height="2.6999999999999997" viewBox="0 0 10 6"><path d="M0 0H10L5 6Z" fill="#222"/></svg>
<svg class="i" style="left:774.8px;top:57.5px" width="13" height="11" viewBox="0 0 13 11"><path d="M6.5 1.2 L12.2 10.2 H0.8 Z" fill="#fff" stroke="#333" stroke-width="1.2" stroke-linejoin="round"/></svg>
<svg class="i" style="left:794.6px;top:56.2px" width="12" height="13" viewBox="0 0 12 13"><rect x="0.6" y="0.6" width="10.8" height="9.8" fill="#f4effc" stroke="#5a4ab0" stroke-width="0.9"/><rect x="0.6" y="0.6" width="10.8" height="2.2" fill="#5a4ab0"/><path d="M0.6 5.2 H11.4 M0.6 7.8 H11.4 M4.2 2.8 V10.4 M7.8 2.8 V10.4" stroke="#8a7ad0" stroke-width="0.8"/><path d="M5 8.8 H11.4 V12.6 H5 Z" fill="#e84a3a"/><path d="M6 10.8 H10.4" stroke="#fff" stroke-width="0.9"/></svg>
<svg class="i" style="left:812.9px;top:56.5px" width="13" height="13" viewBox="0 0 13 13"><path d="M0.6 1.6 H5 L6 2.8 H10.4 V9 H0.6 Z" fill="#f2cf5a"/><path d="M0.6 4 H10.4 V9 H0.6 Z" fill="#f8e08a"/><path d="M5 4 L9.4 11.6 M10.6 5 L6 11 M4.4 8.4 H12.4" stroke="#d0322a" stroke-width="1.1"/><path d="M8 9 V12.8" stroke="#d0322a" stroke-width="1.1"/></svg>
<svg class="i" style="left:832.3px;top:56.5px" width="13" height="13" viewBox="0 0 13 13"><path d="M0.6 1.2 H5 L6 2.4 H10.4 V8.6 H0.6 Z" fill="#f2cf5a"/><path d="M0.6 3.6 H10.4 V8.6 H0.6 Z" fill="#f8e08a"/><circle cx="9.4" cy="5" r="2" fill="#fff" stroke="#444" stroke-width="0.9"/><circle cx="5.6" cy="9.6" r="2" fill="#fff" stroke="#444" stroke-width="0.9"/><circle cx="10.6" cy="10.4" r="2" fill="#fff" stroke="#444" stroke-width="0.9"/><path d="M7.2 9 L8.4 6.6 M7.6 10 L8.8 10.2" stroke="#444" stroke-width="0.8"/></svg>
<svg class="i" style="left:774.1px;top:81.5px" width="13" height="13" viewBox="0 0 13 13"><rect x="0.8" y="0.8" width="11.4" height="11.4" fill="#f4f4f4" stroke="#3a3a3a" stroke-width="1.3"/><path d="M3 5.4 H6.4 M3 8.4 H10" stroke="#3a3a3a" stroke-width="1.2"/></svg>
<svg class="i" style="left:792.8px;top:81.8px" width="14" height="13" viewBox="0 0 14 13"><path d="M4 8 L9.6 1 L11.6 2.4 L7.6 8.6 Z" fill="#b9b49a"/><path d="M9.6 1 L11.6 2.4 L11 3.4 L9 2 Z" fill="#4a6ad0"/><path d="M4 8 L3.4 10 L7.6 8.6 Z" fill="#e2c06a"/><path d="M3 5 L6 7" stroke="#9ab06a" stroke-width="1"/><path d="M1 8.6 V12.6 M13 8.6 V12.6 M1 10.6 H13" stroke="#e0323a" stroke-width="1"/><path d="M1 10.6 L3 9.6 V11.6 Z M13 10.6 L11 9.6 V11.6 Z" fill="#e0323a"/></svg>
<svg class="i" style="left:817.9px;top:81.8px" width="14" height="13" viewBox="0 0 14 13"><circle cx="4.4" cy="3.4" r="2.6" fill="#9aa2aa" stroke="#444" stroke-width="0.9"/><circle cx="9" cy="2.8" r="2.2" fill="#c9ced2" stroke="#444" stroke-width="0.9"/><circle cx="10" cy="5.4" r="1.9" fill="#8a9298" stroke="#444" stroke-width="0.9"/><circle cx="6.4" cy="4.6" r="1.2" fill="#e6e6e6"/><text x="0.4" y="12.6" font-size="5.6" font-weight="bold" fill="#7a3a2a" font-family="Liberation Sans, sans-serif" textLength="13" lengthAdjust="spacingAndGlyphs">10H7</text></svg>
<div style="left:812.6px;top:80px;width:1px;height:16px;background:#e3e3e3"></div>
<span class="t " style="left:771.2px;top:109.7px;font-size:9.2px;color:#2e8bc9;">建模工具 - G...</span>
<svg class="i" style="left:838.25px;top:114.25px" width="4.5" height="2.6999999999999997" viewBox="0 0 10 6"><path d="M0 0H10L5 6Z" fill="#222"/></svg>
<svg class="i" style="left:855.7px;top:56.3px" width="14" height="13" viewBox="0 0 14 13"><path d="M3.6 2.6 L7 0.6 L10 2 V5.6 L6.6 7 L3.6 5.8 Z" fill="#e9cf52"/><path d="M3.6 2.6 L7 0.6 L10 2 L6.6 3.6 Z" fill="#f6e89a"/><path d="M0.4 7.4 L3.8 5.6 L7 7 V11 L3.6 12.6 L0.4 11.2 Z" fill="#dcc040"/><path d="M0.4 7.4 L3.8 5.6 L7 7 L3.6 8.6 Z" fill="#f6e89a"/><path d="M7 7 L10.4 5.4 L13.6 6.8 V10.8 L10.2 12.6 L7 11 Z" fill="#e6cc50"/><path d="M7 7 L10.4 5.4 L13.6 6.8 L10.2 8.4 Z" fill="#f8eeac"/><path d="M10.2 8.4 V12.6 M3.6 8.6 V12.6 M6.6 3.6 V7" stroke="#c0a22a" stroke-width="0.6"/></svg>
<svg class="i" style="left:855.7px;top:82.1px" width="14" height="13" viewBox="0 0 14 13"><path d="M3.6 2.6 L7 0.6 L10 2 V5.6 L6.6 7 L3.6 5.8 Z" fill="#e9cf52"/><path d="M3.6 2.6 L7 0.6 L10 2 L6.6 3.6 Z" fill="#f6e89a"/><path d="M0.4 7.4 L3.8 5.6 L7 7 V11 L3.6 12.6 L0.4 11.2 Z" fill="#dcc040"/><path d="M0.4 7.4 L3.8 5.6 L7 7 L3.6 8.6 Z" fill="#f6e89a"/><path d="M7 7 L10.4 5.4 L13.6 6.8 V10.8 L10.2 12.6 L7 11 Z" fill="#e6cc50"/><path d="M7 7 L10.4 5.4 L13.6 6.8 L10.2 8.4 Z" fill="#f8eeac"/><path d="M10.2 8.4 V12.6 M3.6 8.6 V12.6 M6.6 3.6 V7" stroke="#c0a22a" stroke-width="0.6"/></svg>
<div style="left:851px;top:109.7px;width:9px;height:14px;overflow:hidden"><span class="t" style="left:-3.2px;top:0;font-size:9.2px;color:#2e8bc9">P..</span></div>
<svg class="i" style="left:862.75px;top:114.25px" width="4.5" height="2.6999999999999997" viewBox="0 0 10 6"><path d="M0 0H10L5 6Z" fill="#222"/></svg>
<svg class="i" style="left:880.5px;top:56.2px" width="14" height="13" viewBox="0 0 14 13"><path d="M5.6 3 H9.4 V6 H11 V10 H3.4 V6 H5.6 Z" fill="#fff" stroke="#333" stroke-width="1.1"/><g stroke="#d0323a" stroke-width="1" stroke-dasharray="1.4 1"><path d="M4.4 0.8 H11.4"/><path d="M13 3 V10"/><path d="M0.8 5.6 V10"/><path d="M3 12.2 H11"/></g></svg>
<svg class="i" style="left:906.05px;top:60.3px" width="11.5" height="6" viewBox="0 0 11.5 6"><text x="5.75" y="5.2" text-anchor="middle" font-size="6.3" font-weight="bold" fill="#3a3a3a" font-family="Liberation Sans, sans-serif" textLength="10.6" lengthAdjust="spacingAndGlyphs">1.00</text></svg>
<svg class="i" style="left:925.75px;top:57.2px" width="11.5" height="11" viewBox="0 0 11.5 11"><text x="5.75" y="5" text-anchor="middle" font-size="6.3" font-weight="bold" fill="#3a3a3a" font-family="Liberation Sans, sans-serif" textLength="10.8" lengthAdjust="spacingAndGlyphs">1.00</text><text x="6" y="10.6" text-anchor="middle" font-size="5.6" font-weight="bold" fill="#d4454a" font-family="Liberation Sans, sans-serif" textLength="10.4" lengthAdjust="spacingAndGlyphs">±.05</text></svg>
<svg class="i" style="left:945.15px;top:57.2px" width="11.5" height="11" viewBox="0 0 11.5 11"><text x="5.75" y="5" text-anchor="middle" font-size="6.3" font-weight="bold" fill="#3a3a3a" font-family="Liberation Sans, sans-serif" textLength="10.8" lengthAdjust="spacingAndGlyphs">1.00</text><text x="6" y="10.6" text-anchor="middle" font-size="5.6" font-weight="bold" fill="#d4454a" font-family="Liberation Sans, sans-serif" textLength="9" lengthAdjust="spacingAndGlyphs">-.03</text></svg>
<svg class="i" style="left:964.45px;top:57.2px" width="11.5" height="11" viewBox="0 0 11.5 11"><text x="5.75" y="5" text-anchor="middle" font-size="6.3" font-weight="bold" fill="#3a3a3a" font-family="Liberation Sans, sans-serif" textLength="10.8" lengthAdjust="spacingAndGlyphs">1.00</text><text x="6" y="10.6" text-anchor="middle" font-size="5.6" font-weight="bold" fill="#d4454a" font-family="Liberation Sans, sans-serif" textLength="9" lengthAdjust="spacingAndGlyphs">-.08</text></svg>
<svg class="i" style="left:983.55px;top:57.2px" width="11.5" height="11" viewBox="0 0 11.5 11"><text x="5.75" y="5" text-anchor="middle" font-size="6.3" font-weight="bold" fill="#3a3a3a" font-family="Liberation Sans, sans-serif" textLength="10.8" lengthAdjust="spacingAndGlyphs">1.00</text><text x="6" y="10.6" text-anchor="middle" font-size="5.6" font-weight="bold" fill="#d4454a" font-family="Liberation Sans, sans-serif" textLength="9" lengthAdjust="spacingAndGlyphs">-.03</text></svg>
<div style="left:899.5px;top:56.5px;width:1px;height:14.5px;background:#e3e3e3"></div>
<svg class="i" style="left:881.7px;top:82.0px" width="12" height="12" viewBox="0 0 12 12"><path d="M1 10.8 L11.4 0.6" stroke="#d0323a" stroke-width="1.1"/><circle cx="1.4" cy="10.6" r="1.2" fill="#c02a30"/><path d="M3.4 5 L6 7.4 M5.4 3.4 L8 5.8" stroke="#d0323a" stroke-width="0.9"/><circle cx="6.4" cy="4.4" r="1.1" fill="none" stroke="#d0323a" stroke-width="0.7"/></svg>
<svg class="i" style="left:900.4px;top:82.8px" width="13" height="9" viewBox="0 0 13 9"><path d="M1 8 L4.6 3.6 H12.4" stroke="#d0323a" stroke-width="1" fill="none"/><circle cx="1.2" cy="7.8" r="1.1" fill="#c02a30"/><rect x="5" y="0.4" width="2.6" height="2.4" fill="#e2868a"/><rect x="8.6" y="0.4" width="2.6" height="2.4" fill="#e2868a"/></svg>
<svg class="i" style="left:926.5px;top:81.5px" width="11" height="11" viewBox="0 0 11 11"><circle cx="5" cy="6.2" r="3.8" fill="none" stroke="#3a3a3a" stroke-width="1.2"/><path d="M1.6 10 L10.4 0.6" stroke="#d0323a" stroke-width="1.1"/></svg>
<svg class="i" style="left:944.2px;top:81.5px" width="13" height="12" viewBox="0 0 13 12"><circle cx="6.6" cy="6.4" r="4.2" fill="none" stroke="#3a3a3a" stroke-width="1.2"/><path d="M0.6 11.6 L12.4 0.4" stroke="#d0323a" stroke-width="1.1"/></svg>
<svg class="i" style="left:964.7px;top:87.1px" width="9" height="7" viewBox="0 0 9 7"><path d="M7.4 0.4 V3.6 C7.4 4.4 6.8 4.6 6 4.6 H3.6 V6.6 L0.4 3.8 L3.6 1 V3 H5.8 V0.4 Z" fill="#2f9a98"/></svg>
<div style="left:918.8px;top:80px;width:1px;height:16px;background:#e3e3e3"></div>
<span class="t " style="left:922.2px;top:109.7px;font-size:9.2px;color:#2e8bc9;">尺寸快速格式化工具</span>
<div style="left:0px;top:124.6px;width:1000px;height:25.4px;background:#fcfcfc"></div>
<svg class="i" style="left:7.0px;top:131.5px" width="13" height="11" viewBox="0 0 13 11"><rect x="0.4" y="0.6" width="10" height="2" fill="#6a88c8"/><rect x="0.4" y="0.6" width="10" height="7.6" fill="none" stroke="#7a92c8" stroke-width="0.8"/><path d="M3 4.6 H11 M3 6.6 H11 M4.6 8.6 H12.6 M4.6 10.4 H12.6" stroke="#555" stroke-width="0.9"/><rect x="2.6" y="3.6" width="10" height="7.2" fill="none" stroke="#8a8a8a" stroke-width="0.7"/></svg>
<span class="t " style="left:24px;top:130.9px;font-size:9.3px;color:#222;">菜单(<u>M</u>)</span>
<svg class="i" style="left:63.25px;top:135.95000000000002px" width="4.5" height="2.6999999999999997" viewBox="0 0 10 6"><path d="M0 0H10L5 6Z" fill="#222"/></svg>
<div style="left:72.7px;top:128.4px;width:1px;height:19px;background:#e3e3e3"></div>
<div style="left:83px;top:128.8px;width:112px;height:17.2px;background:#fff;border:1px solid #bdbdbd;box-sizing:border-box"></div>
<span class="t " style="left:86px;top:131.0px;font-size:9.1px;color:#222;">没有选择过滤器</span>
<svg class="i" style="left:183.25px;top:136.15px" width="5.5" height="3.3" viewBox="0 0 10 6"><path d="M0 0H10L5 6Z" fill="#222"/></svg>
<div style="left:201px;top:128.8px;width:118px;height:17.2px;background:#fff;border:1px solid #bdbdbd;box-sizing:border-box"></div>
<span class="t " style="left:204px;top:131.0px;font-size:9.1px;color:#222;">整个装配</span>
<svg class="i" style="left:308.25px;top:136.15px" width="5.5" height="3.3" viewBox="0 0 10 6"><path d="M0 0H10L5 6Z" fill="#222"/></svg>
<div style="left:510px;top:128.2px;width:18.8px;height:18.6px;background:#cbd8d7;box-shadow:inset 0 0 0 1px #bfcdcc"></div>
<div style="left:530px;top:128.2px;width:18.8px;height:18.6px;background:#cbd8d7;box-shadow:inset 0 0 0 1px #bfcdcc"></div>
<div style="left:552px;top:128.2px;width:18.8px;height:18.6px;background:#cbd8d7;box-shadow:inset 0 0 0 1px #bfcdcc"></div>
<div style="left:594px;top:128.2px;width:18.8px;height:18.6px;background:#cbd8d7;box-shadow:inset 0 0 0 1px #bfcdcc"></div>
<div style="left:636px;top:128.2px;width:18.8px;height:18.6px;background:#cbd8d7;box-shadow:inset 0 0 0 1px #bfcdcc"></div>
<div style="left:678px;top:128.2px;width:18.8px;height:18.6px;background:#cbd8d7;box-shadow:inset 0 0 0 1px #bfcdcc"></div>
<div style="left:698.6px;top:128.2px;width:18.8px;height:18.6px;background:#cbd8d7;box-shadow:inset 0 0 0 1px #bfcdcc"></div>
<svg class="i" style="left:327.0px;top:131.0px" width="14" height="12" viewBox="0 0 14 12"><path d="M3.4 0.6 V11.4 M0.6 3.4 H9" stroke="#d0d0d0" stroke-width="1.1"/><rect x="1.6" y="3.4" width="5" height="7" fill="none" stroke="#d0d0d0" stroke-width="1"/><circle cx="10.6" cy="4.4" r="2.2" fill="none" stroke="#d0d0d0" stroke-width="1"/><circle cx="10.6" cy="8.6" r="2.2" fill="none" stroke="#d0d0d0" stroke-width="1"/></svg>
<svg class="i" style="left:349.0px;top:132.0px" width="13" height="11" viewBox="0 0 13 11"><path d="M0.6 3 L3 0.8 L5.6 3 L3.4 5.4 Z" fill="#d0d0d0"/><path d="M5 5 H12.4 L9.6 8 V10.6 L7.8 9.6 V8 Z" fill="#e9e9e9" stroke="#d0d0d0" stroke-width="0.9"/></svg>
<svg class="i" style="left:367.0px;top:129.8px" width="14" height="14" viewBox="0 0 14 14"><rect x="0.5" y="0.5" width="13" height="13" fill="#fff" stroke="#d24a4a" stroke-width="1"/><path d="M4.6 1.8 V7.4 M1.8 4.6 H7.4" stroke="#2a3a8a" stroke-width="1.2"/><circle cx="4.6" cy="4.6" r="1.2" fill="#e03a3a"/><path d="M6.4 7.4 H12.4 L10.2 10 V12.4 L8.6 11.6 V10 Z" fill="#f2c83a" stroke="#b8922a" stroke-width="0.6"/></svg>
<svg class="i" style="left:398.0px;top:131.0px" width="11" height="12" viewBox="0 0 11 12"><path d="M0.6 3.6 C1.6 0.6 6.4 0.2 7.4 3.6 L9 3.6 L6.6 6.4 L4.4 3.6 L5.8 3.6 C5 1.6 2.6 1.8 2 3.6 Z" fill="#d0d0d0"/><path d="M7.4 5.4 V11.6 M4.4 8.6 H10.6" stroke="#d0d0d0" stroke-width="1.2"/></svg>
<svg class="i" style="left:419.0px;top:131.0px" width="13" height="12" viewBox="0 0 13 12"><path d="M0.6 1.6 C3 0 7 0.4 8 3 L8.6 6 L6.4 6.6 L5.6 3.6 C4.6 2.6 2.6 2.6 1.2 3.4 Z" fill="#d0d0d0"/><path d="M8.6 5 V11.6 M10.6 7 V11.6 M12.4 8.6 V11.6" stroke="#d0d0d0" stroke-width="1"/></svg>
<svg class="i" style="left:438.3px;top:131.8px" width="14" height="11" viewBox="0 0 14 11"><rect x="1.2" y="1" width="11" height="9" fill="none" stroke="#444" stroke-width="1.2" stroke-dasharray="1.6 1.4"/><rect x="0" y="0" width="2.4" height="2.2" fill="#e03a3a"/><rect x="11.4" y="8.8" width="2.4" height="2.2" fill="#e03a3a"/><circle cx="12.6" cy="1" r="0.9" fill="#e03a3a"/><circle cx="1.2" cy="10" r="0.9" fill="#e03a3a"/></svg>
<svg class="i" style="left:471.0px;top:132.0px" width="13" height="11" viewBox="0 0 13 11"><path d="M0.6 5 L4 1 L12.4 2.6 L12.4 7 L8.6 10.6 L0.6 8.6 Z" fill="#d9d9d9" stroke="#555" stroke-width="0.9"/><path d="M0.6 5 L9 6.6 L12.4 2.6 M9 6.6 L8.6 10.6" stroke="#555" stroke-width="0.8" fill="none"/><path d="M2.6 4.6 L5 2 L10.6 3 L8.4 5.6 Z" fill="#f2f2f2"/><path d="M3.6 4.4 L9.6 3.4" stroke="#e03a3a" stroke-width="1.2"/></svg>
<svg class="i" style="left:491.0px;top:131.5px" width="13" height="12" viewBox="0 0 13 12"><path d="M0.6 2.6 L6.6 0.6 L12.4 2.6 V8.6 L6.6 11.4 L0.6 8.6 Z" fill="#4a7ad8"/><path d="M0.6 2.6 L6.6 0.6 L12.4 2.6 L6.6 4.8 Z" fill="#d9e8fb"/><path d="M0.6 2.6 L6.6 4.8 V11.4 L0.6 8.6 Z" fill="#6a9aea"/><path d="M1.6 3.6 L5.8 5.2" stroke="#f2a0a0" stroke-width="1"/></svg>
<svg class="i" style="left:512.4px;top:132.6px" width="15" height="12" viewBox="0 0 15 12"><g fill="#3a3c2a"><circle cx="9" cy="2" r="1.7"/><circle cx="9" cy="10" r="1.7"/><circle cx="4.9" cy="6" r="1.7"/><circle cx="13.1" cy="6" r="1.7" fill="#3a3e5a"/></g><path d="M6.6 3.6 L11.4 8.4 M11.4 3.6 L6.6 8.4" stroke="#e8d23a" stroke-width="1.8"/><circle cx="9" cy="6" r="2.1" fill="#ecd432"/><circle cx="2" cy="2.4" r="1.5" fill="#2a9a3c"/><circle cx="2" cy="9.2" r="1.5" fill="#c8282a"/></svg>
<svg class="i" style="left:534.0px;top:131.5px" width="12" height="12" viewBox="0 0 12 12"><path d="M0.8 11.2 L10.4 1.6" stroke="#333" stroke-width="1.2"/><circle cx="10.2" cy="1.8" r="1.5" fill="#c82a3a"/></svg>
<svg class="i" style="left:555.5px;top:131.5px" width="12" height="12" viewBox="0 0 12 12"><path d="M0.8 11.2 L11.2 0.8" stroke="#333" stroke-width="1.2"/><circle cx="6" cy="6" r="1.6" fill="#d02a3a"/></svg>
<svg class="i" style="left:576.0px;top:130.5px" width="11" height="13" viewBox="0 0 11 13"><path d="M0.6 0.8 C5 0.8 5.4 3 5.4 6.4 C5.4 10 6 12.2 10.4 12.2" fill="none" stroke="#6a2a2a" stroke-width="1.2"/></svg>
<svg class="i" style="left:596.5px;top:130.5px" width="15" height="13" viewBox="0 0 15 13"><path d="M1.4 9 L5 1.4 L9.4 11.4 L13.4 5" fill="none" stroke="#2a3ac0" stroke-width="1.3"/><path d="M2.6 6.6 H8" stroke="#2a3ac0" stroke-width="1.1"/><g fill="#e0323a"><circle cx="1.4" cy="9" r="1.3"/><circle cx="5" cy="1.6" r="1.3"/><circle cx="9.4" cy="11.4" r="1.3"/><circle cx="13.4" cy="5" r="1.3"/><circle cx="8" cy="6.6" r="1.1"/></g></svg>
<svg class="i" style="left:617.0px;top:131.5px" width="14" height="12" viewBox="0 0 14 12"><path d="M0.6 8 C3 3.6 11 3.6 13.4 8" fill="none" stroke="#444" stroke-width="1.1"/><path d="M7 0.6 V11.4" stroke="#6a3a3a" stroke-width="1.2"/></svg>
<svg class="i" style="left:639.0px;top:131.0px" width="13" height="13" viewBox="0 0 13 13"><circle cx="6.5" cy="6.5" r="5.7" fill="none" stroke="#2a2a2a" stroke-width="1.2"/><circle cx="6.5" cy="6.5" r="1.5" fill="#e0223a"/></svg>
<svg class="i" style="left:659.5px;top:130.5px" width="13" height="13" viewBox="0 0 13 13"><circle cx="6.5" cy="6.5" r="5" fill="none" stroke="#e0323a" stroke-width="1.2"/><g fill="#e0323a"><circle cx="6.5" cy="1.4" r="1.2"/><circle cx="6.5" cy="11.6" r="1.2"/><circle cx="1.4" cy="6.5" r="1.2"/><circle cx="11.6" cy="6.5" r="1.2"/></g></svg>
<svg class="i" style="left:682.0px;top:131.5px" width="12" height="12" viewBox="0 0 12 12"><path d="M6 0.6 V11.4 M0.6 6 H11.4" stroke="#2a2a2a" stroke-width="1.3"/><circle cx="6" cy="6" r="1" fill="#c02a3a"/></svg>
<svg class="i" style="left:702.0px;top:131.5px" width="12" height="12" viewBox="0 0 12 12"><path d="M0.8 11.2 L11.2 0.8" stroke="#333" stroke-width="1.2"/><circle cx="3.6" cy="8.4" r="1.5" fill="#d02a3a"/></svg>
<svg class="i" style="left:722.0px;top:130.5px" width="14" height="13" viewBox="0 0 14 13"><path d="M1 2.6 C4 0 10 0.4 12.6 3.4 L10.6 11.6 C8 12.6 5.6 11.6 4.6 9.6 C2 9 0.4 6 1 2.6 Z" fill="#c9dcf6" stroke="#6a8ac8" stroke-width="0.9"/><path d="M4.6 9.6 C5 7 7 5.4 9.6 5.6" stroke="#6a8ac8" stroke-width="0.8" fill="none"/><circle cx="9" cy="3.4" r="1.2" fill="#e0323a"/><path d="M3 3 L7.4 5" stroke="#fff" stroke-width="1.2"/></svg>
<svg class="i" style="left:744.5px;top:131.5px" width="10" height="12" viewBox="0 0 10 12"><path d="M0.6 0.8 L9.4 2.4 V11.4 L0.6 9.6 Z" fill="#f6eeee" stroke="#6a2a2a" stroke-width="0.9"/><path d="M0.6 3.8 L9.4 5.4 M0.6 6.8 L9.4 8.4 M3.6 1.4 V10.2 M6.6 2 V10.8" stroke="#6a2a2a" stroke-width="0.8"/></svg>
<svg class="i" style="left:775.7px;top:131.0px" width="14" height="13" viewBox="0 0 14 13"><rect x="1.6" y="1" width="11" height="9.6" fill="#e6eefb" stroke="#4a6ab8" stroke-width="0.9"/><rect x="1.6" y="1" width="11" height="2" fill="#4a6ab8"/><circle cx="7.4" cy="7" r="3.6" fill="#f4f8ff" stroke="#555" stroke-width="1"/><path d="M10 9.8 L12.8 12.6" stroke="#555" stroke-width="1.4"/><rect x="0" y="10" width="2.4" height="2.4" fill="#e0323a"/><rect x="0" y="0.2" width="2.2" height="2.2" fill="#e0323a" opacity="0.7"/></svg>
<svg class="i" style="left:797.0px;top:131.0px" width="14" height="12" viewBox="0 0 14 12"><rect x="0.6" y="0.6" width="11.4" height="9" fill="#f6f0ea" stroke="#8a8aa8" stroke-width="0.9"/><rect x="0.6" y="0.6" width="11.4" height="1.6" fill="#a8a8c8"/><path d="M6 5 H13.4 V11.6 H6 Z" fill="#f2d8a0" stroke="#c8a86a" stroke-width="0.7"/><circle cx="9.6" cy="8.4" r="1.6" fill="#fbeec8"/></svg>
<svg class="i" style="left:818.0px;top:131.5px" width="12" height="12" viewBox="0 0 12 12"><path d="M1.2 5.4 C1.6 2.4 4.6 0.6 7.6 1.4 L8.4 0 L10.2 3.8 L6 4 L6.8 2.8 C5 2.4 3.2 3.6 2.8 5.6 Z" fill="#6a7a8a"/><path d="M10.8 6.6 C10.4 9.6 7.4 11.4 4.4 10.6 L3.6 12 L1.8 8.2 L6 8 L5.2 9.2 C7 9.6 8.8 8.4 9.2 6.4 Z" fill="#4a78c8"/></svg>
<svg class="i" style="left:838.7px;top:131.0px" width="15" height="13" viewBox="0 0 15 13"><rect x="0.6" y="0.6" width="13.8" height="11.8" fill="#f4f4fb" stroke="#3a52c0" stroke-width="1.1"/><rect x="0.6" y="0.6" width="13.8" height="2.4" fill="#3a52c0"/><g fill="#f0624a"><rect x="3" y="4.4" width="3.4" height="2.8"/><rect x="8.6" y="4.4" width="3.4" height="2.8"/><rect x="3" y="8.4" width="3.4" height="2.8"/><rect x="8.6" y="8.4" width="3.4" height="2.8"/></g></svg>
<svg class="i" style="left:870.3px;top:131.5px" width="14" height="12" viewBox="0 0 14 12"><path d="M0.6 8 L5 4 L13.4 6.6 L9 11.4 Z" fill="#9a9a9a"/><path d="M4 5 C4 1 9 0 11 3 L12.6 6.4 L5 4 Z" fill="#7a7a7a"/><path d="M5.6 4.4 C6 2.4 8.6 1.8 10 3.4" stroke="#c8c8c8" stroke-width="1" fill="none"/><path d="M0.6 8 L9 11.4 L9.4 10 L1.4 7.2 Z" fill="#5a5a5a"/></svg>
<svg class="i" style="left:901.8px;top:131.5px" width="13" height="12" viewBox="0 0 13 12"><path d="M0.6 3 L6.6 0.6 L12.4 2.6 V9 L6.4 11.4 L0.6 9.4 Z" fill="#5a82d8"/><path d="M0.6 3 L6.6 0.6 L12.4 2.6 L6.4 5 Z" fill="#b9d0f6"/><path d="M0.6 3 L6.4 5 V11.4 L0.6 9.4 Z" fill="#86a8ec"/></svg>
<svg class="i" style="left:931.0px;top:131.5px" width="15" height="12" viewBox="0 0 15 12"><path d="M5 6 L9.6 0.8 L14.4 6 L9.6 11.2 Z" fill="#dfe8fb" stroke="#4a6ab8" stroke-width="1"/><path d="M7.4 6 L9.6 3.4 L12 6 L9.6 8.6 Z" fill="#9ab4ee"/><path d="M0.4 0.8 L3.6 2.6 L0.4 4.4 Z" fill="#2fa83c"/><path d="M0.4 7.6 L3.6 9.4 L0.4 11.2 Z" fill="#e0322a"/><path d="M3.4 3 L6 5.4 M3.4 9 L6 6.8" stroke="#c03a3a" stroke-width="0.9"/></svg>
<svg class="i" style="left:386.35px;top:135.95000000000002px" width="4.5" height="2.6999999999999997" viewBox="0 0 10 6"><path d="M0 0H10L5 6Z" fill="#222"/></svg>
<svg class="i" style="left:458.75px;top:135.95000000000002px" width="4.5" height="2.6999999999999997" viewBox="0 0 10 6"><path d="M0 0H10L5 6Z" fill="#222"/></svg>
<svg class="i" style="left:859.25px;top:135.95000000000002px" width="4.5" height="2.6999999999999997" viewBox="0 0 10 6"><path d="M0 0H10L5 6Z" fill="#222"/></svg>
<svg class="i" style="left:890.15px;top:135.95000000000002px" width="4.5" height="2.6999999999999997" viewBox="0 0 10 6"><path d="M0 0H10L5 6Z" fill="#222"/></svg>
<svg class="i" style="left:921.35px;top:135.95000000000002px" width="4.5" height="2.6999999999999997" viewBox="0 0 10 6"><path d="M0 0H10L5 6Z" fill="#222"/></svg>
<svg class="i" style="left:952.25px;top:135.95000000000002px" width="4.5" height="2.6999999999999997" viewBox="0 0 10 6"><path d="M0 0H10L5 6Z" fill="#222"/></svg>
<div style="left:766.4px;top:127px;width:1px;height:20px;background:#e0e0e0"></div>
<div style="left:965px;top:127px;width:1px;height:20px;background:#e0e0e0"></div>
<div style="left:0px;top:150px;width:1000px;height:443px;background:#e3e3e3"></div>
<div style="left:214.3px;top:150px;width:785.7px;height:443px;background:linear-gradient(180deg,#b2b5b6 0px,#e5e9ec 328px,#e5e9ec 100%)"></div>
<div style="left:0px;top:150px;width:27.2px;height:443px;background:#dcdcdc;border-right:1.2px solid #c4c4c4;box-sizing:border-box"></div>
<div style="left:2px;top:255.5px;width:26px;height:38px;background:#fff;border:1px solid #cfcfcf;border-right:none;box-sizing:border-box;border-radius:2px 0 0 2px"></div>
<svg class="i" style="left:6.300000000000001px;top:155.7px" width="13" height="13" viewBox="0 0 13 13"><g transform="translate(6.5 6.5)"><g fill="#3a3a3a"><rect x="-1.1" y="-6" width="2.2" height="12"/><rect x="-1.1" y="-6" width="2.2" height="12" transform="rotate(45)"/><rect x="-1.1" y="-6" width="2.2" height="12" transform="rotate(90)"/><rect x="-1.1" y="-6" width="2.2" height="12" transform="rotate(135)"/></g><circle r="4.5" fill="#3a3a3a"/><circle r="3.2" fill="#ececec"/></g></svg>
<svg class="i" style="left:6.6px;top:194.2px" width="18" height="20" viewBox="0 0 18 20"><path d="M3.4 8 V18.6 M3.4 12 H17.4 M3.4 15.6 H9" stroke="#1a1a8a" stroke-width="1.1" fill="none"/><g transform="translate(0.4 3.4) scale(1)"><path d="M0 1.6 L3 0 L6 1.6 V5 L3 6.6 L0 5 Z" fill="#e6c21e"/><path d="M0 1.6 L3 0 L6 1.6 L3 3.2 Z" fill="#fbf08a"/><path d="M3 3.2 L6 1.6 V5 L3 6.6 Z" fill="#c8a010"/></g><g transform="translate(3.6 0.2) scale(0.95)"><path d="M0 1.6 L3 0 L6 1.6 V5 L3 6.6 L0 5 Z" fill="#e6c21e"/><path d="M0 1.6 L3 0 L6 1.6 L3 3.2 Z" fill="#fbf08a"/><path d="M3 3.2 L6 1.6 V5 L3 6.6 Z" fill="#c8a010"/></g><g transform="translate(4.4 4.4) scale(0.9)"><path d="M0 1.6 L3 0 L6 1.6 V5 L3 6.6 L0 5 Z" fill="#e6c21e"/><path d="M0 1.6 L3 0 L6 1.6 L3 3.2 Z" fill="#fbf08a"/><path d="M3 3.2 L6 1.6 V5 L3 6.6 Z" fill="#c8a010"/></g><g transform="translate(9.6 13) scale(1.05)"><path d="M0 1.6 L3 0 L6 1.6 V5 L3 6.6 L0 5 Z" fill="#e6c21e"/><path d="M0 1.6 L3 0 L6 1.6 L3 3.2 Z" fill="#fbf08a"/><path d="M3 3.2 L6 1.6 V5 L3 6.6 Z" fill="#c8a010"/></g></svg>
<svg class="i" style="left:5.5px;top:229.5px" width="19" height="20" viewBox="0 0 19 20"><path d="M3 0.6 L9.6 5.4 L3 10.2 Z" fill="#1a2ae0"/><path d="M16.2 0.6 L9.6 5.4 L16.2 10.2 Z" fill="#1a2ae0"/><path d="M9.6 0.4 V19.6" stroke="#333" stroke-width="0.9" stroke-dasharray="1.2 1.2"/><rect x="0.8" y="11.6" width="7.4" height="7.4" fill="#f6f03a" stroke="#555" stroke-width="0.9"/><path d="M11 11 L18.4 19 H11 Z" fill="#e01a1a" stroke="#7a1010" stroke-width="0.8"/></svg>
<svg class="i" style="left:5.6px;top:265.5px" width="18" height="19" viewBox="0 0 18 19"><path d="M5.4 8.4 V17 M5.4 13.4 H9 M11 5.4 H17.4" stroke="#1a1a6a" stroke-width="1.1" fill="none"/><path d="M0.8 2.4 C0.8 0.4 8.2 0.4 8.2 2.4 V7 C8.2 9 0.8 9 0.8 7 Z" fill="#e060c0" stroke="#8a1a6a" stroke-width="0.9"/><ellipse cx="4.5" cy="2.4" rx="3.7" ry="1.5" fill="#f6b0e6" stroke="#8a1a6a" stroke-width="0.8"/><circle cx="13.4" cy="14.4" r="3.6" fill="#fbe6f6" stroke="#b0208a" stroke-width="1.1"/><circle cx="13.4" cy="14.4" r="1.5" fill="#c8309a"/></svg>
<svg class="i" style="left:4.699999999999999px;top:300.8px" width="20" height="19" viewBox="0 0 20 19"><path d="M0.6 5 L3.4 1.4 L7 1.4 V15 L5 18.6 H0.6 Z" fill="#f08a1e"/><path d="M0.6 5 L3.4 1.4 L7 1.4 L5 5 Z" fill="#fbd8a0"/><path d="M0.6 5 H5 V18.6 H0.6 Z" fill="#f6a02a"/><path d="M6.2 5 L9 1 L13 1 V15 L11 18.6 H6.2 Z" fill="#2eb82e"/><path d="M6.2 5 L9 1 L13 1 L11 5 Z" fill="#c8f0c0"/><path d="M6.2 5 H11 V18.6 H6.2 Z" fill="#3cd23c"/><path d="M12 5 L15 0.6 L19.4 0.6 V14 L17.4 18.6 H12 Z" fill="#1e6ad8"/><path d="M12 5 L15 0.6 L19.4 0.6 L17.4 5 Z" fill="#c0d8f8"/><path d="M12 5 H17.4 V18.6 H12 Z" fill="#3a8af0"/><path d="M17.4 5 L19.4 0.6 V14 L17.4 18.6 Z" fill="#1650b0"/></svg>
<svg class="i" style="left:7.0px;top:392.0px" width="16" height="18" viewBox="0 0 16 18"><path d="M0.8 0.8 H10.4 L15.2 5.6 V17.2 H0.8 Z" fill="#f8fbff" stroke="#4a6ad0" stroke-width="1.1"/><path d="M10.4 0.8 V5.6 H15.2" fill="#d8e4fb" stroke="#4a6ad0" stroke-width="0.9"/><circle cx="7.6" cy="11" r="4.4" fill="#2a6ad0"/><path d="M4.6 9 C6 7.4 8.4 8 9 9.6 C10 11 9 13.4 7 13.8 C5.4 13.6 4.4 11.4 4.6 9 Z" fill="#3cb84a"/><circle cx="6.6" cy="9.6" r="1.4" fill="#9ae09a" opacity="0.8"/></svg>
<svg class="i" style="left:6.300000000000001px;top:437.2px" width="18" height="18" viewBox="0 0 18 18"><circle cx="9" cy="9" r="8.3" fill="url(#gClk)" stroke="#7a8aa8" stroke-width="1.3"/><circle cx="9" cy="9" r="6.4" fill="#fafcff" stroke="#c8d2e6" stroke-width="0.7"/><path d="M9 3.6 V9.4 H13.4" stroke="#1a1a1a" stroke-width="1.5" fill="none"/></svg>
<svg class="i" style="left:6.199999999999999px;top:470.7px" width="17" height="21" viewBox="0 0 17 21"><rect x="0.4" y="0.6" width="6.6" height="19.4" fill="url(#gRain)"/><path d="M8.4 6.6 L15.6 17.6" stroke="#1a1a1a" stroke-width="2.4"/><path d="M7.6 3.6 L9.6 7.4 L7.6 8 Z" fill="#e8e8e8"/><path d="M15 16.6 L16.6 20 L13.8 18.4 Z" fill="#555"/></svg>
<svg class="i" style="left:6.199999999999999px;top:508.1px" width="18" height="17" viewBox="0 0 18 17"><path d="M3.4 2.6 C3.4 0 6.6 0 6.6 2.6 L7.4 12 H2.6 Z" fill="#3a8ad8"/><circle cx="5" cy="2.4" r="1.9" fill="#5aa2e8"/><path d="M0.6 13.6 C2 11.6 8 11.6 9.4 13.6 L8.4 16 H1.6 Z" fill="#8ab870"/><path d="M7.4 1.6 H17.4 L11.6 9 Z" fill="#f2f6ff" stroke="#3a6ad0" stroke-width="1.1"/><path d="M8.6 4.6 L14.4 14.6" stroke="#111" stroke-width="2.2"/><path d="M7.8 3 L10 5.4 L7.8 6.4 Z" fill="#111"/></svg>
<svg class="i" style="left:-25.5px;top:352.9px" width="42" height="42" viewBox="0 0 42 42"><circle cx="21" cy="21" r="20.4" fill="#d9dcd9"/><circle cx="21" cy="21" r="19.2" fill="url(#gBadge)"/><text x="26.4" y="23.9" font-size="8.6" font-weight="bold" font-style="italic" fill="#e6f6e6" font-family="Liberation Sans, sans-serif">67</text></svg>
<svg class="i" style="left:5.800000000000001px;top:344.5px" width="20" height="21" viewBox="0 0 20 21"><g fill="none" stroke="#3a62d0" stroke-linecap="round"><path d="M10.4 7.6 C12.6 7.4 14.4 9.6 14 12" stroke-width="1.8"/><path d="M10.6 4.2 C14.6 3.4 18 7.4 17.2 11.6" stroke-width="1.8"/><path d="M10.8 0.9 C16.4 0.2 21 5.6 19.9 11.4" stroke-width="1.8"/></g><circle cx="6.3" cy="13.6" r="6.2" fill="#2a62d8"/><circle cx="5.2" cy="12" r="3.4" fill="#6a9af0" opacity="0.55"/><rect x="5.3" y="12.4" width="2.2" height="4.8" fill="#fff"/><circle cx="6.4" cy="10.2" r="1.25" fill="#fff"/></svg>
<svg class="i" style="left:2px;top:529.5px" width="23" height="8" viewBox="0 0 24 8"><path d="M1 4.4 C5 7.6 9 7 12 4.4 C15 1.6 19 0.6 23 3" stroke="#444" stroke-width="1" fill="none"/></svg>
<svg class="i" style="left:10.3px;top:541.5px" width="5.6" height="4.4" viewBox="0 0 6 5"><path d="M0 0H6V1H0Z M0 5H6L3 2Z" fill="#c4c4c4"/></svg>
<svg class="i" style="left:10.8px;top:555px" width="4.6" height="2.8" viewBox="0 0 10 6"><path d="M0 6H10L5 0Z" fill="#c4c4c4"/></svg>
<svg class="i" style="left:10.85px;top:569.65px" width="4.5" height="2.6999999999999997" viewBox="0 0 10 6"><path d="M0 0H10L5 6Z" fill="#222"/></svg>
<svg class="i" style="left:10.3px;top:581px" width="5.6" height="5.6" viewBox="0 0 6 6"><path d="M0 0H6V1H0Z M0 2.5H6L3 6Z" fill="#333"/></svg>
<div style="left:27px;top:150px;width:187.3px;height:443px;background:#fff"></div>
<span class="t " style="left:36px;top:157.0px;font-size:9.8px;color:#222;">部件导航器</span>
<div style="left:0px;top:149.6px;width:215px;height:1.2px;background:#cdcdcd"></div>
<svg class="i" style="left:190.4px;top:159.6px" width="10.4" height="9.2" viewBox="0 0 10.4 9.2"><rect x="0.7" y="0.7" width="9" height="7.8" fill="#fff" stroke="#2a2a2a" stroke-width="1.3"/></svg>
<div style="left:32.5px;top:175px;width:174.5px;height:332.5px;background:#fff;border:1px solid #e6e6e6;box-sizing:border-box"></div>
<div style="left:33.5px;top:176px;width:172.5px;height:17px;background:linear-gradient(180deg,#f6f6f6,#ededed);border-bottom:1px solid #dedede;box-sizing:border-box"></div>
<span class="t " style="left:39px;top:178.0px;font-size:9.3px;color:#222;">名称</span>
<svg class="i" style="left:74px;top:183px" width="7" height="4" viewBox="0 0 10 6"><path d="M0 6H10L5 0Z" fill="#222"/></svg>
<div style="left:34px;top:210.7px;width:168px;height:1px;background:#eeeeee"></div>
<div style="left:34px;top:211.2px;width:168px;height:16.88px;background:#f8f8f8"></div>
<div style="left:34px;top:227.6px;width:168px;height:1px;background:#eeeeee"></div>
<div style="left:34px;top:244.4px;width:168px;height:1px;background:#eeeeee"></div>
<div style="left:34px;top:244.9px;width:168px;height:16.88px;background:#f8f8f8"></div>
<div style="left:34px;top:261.3px;width:168px;height:1px;background:#eeeeee"></div>
<div style="left:34px;top:278.2px;width:168px;height:1px;background:#eeeeee"></div>
<div style="left:34px;top:278.7px;width:168px;height:16.88px;background:#f8f8f8"></div>
<div style="left:34px;top:295.1px;width:168px;height:1px;background:#eeeeee"></div>
<div style="left:34px;top:312.0px;width:168px;height:1px;background:#eeeeee"></div>
<div style="left:34px;top:312.5px;width:168px;height:16.88px;background:#f8f8f8"></div>
<div style="left:34px;top:328.8px;width:168px;height:1px;background:#eeeeee"></div>
<div style="left:34px;top:345.7px;width:168px;height:1px;background:#eeeeee"></div>
<div style="left:34px;top:346.2px;width:168px;height:16.88px;background:#f8f8f8"></div>
<div style="left:34px;top:362.6px;width:168px;height:1px;background:#eeeeee"></div>
<div style="left:34px;top:379.5px;width:168px;height:1px;background:#eeeeee"></div>
<div style="left:34px;top:380.0px;width:168px;height:16.88px;background:#f8f8f8"></div>
<div style="left:34px;top:396.4px;width:168px;height:1px;background:#eeeeee"></div>
<div style="left:34px;top:413.2px;width:168px;height:1px;background:#eeeeee"></div>
<div style="left:34px;top:413.7px;width:168px;height:16.88px;background:#f8f8f8"></div>
<div style="left:34px;top:430.1px;width:168px;height:1px;background:#eeeeee"></div>
<div style="left:34px;top:447.0px;width:168px;height:1px;background:#eeeeee"></div>
<div style="left:34px;top:447.5px;width:168px;height:16.88px;background:#f8f8f8"></div>
<div style="left:34px;top:463.9px;width:168px;height:1px;background:#eeeeee"></div>
<div style="left:34px;top:480.8px;width:168px;height:1px;background:#eeeeee"></div>
<div style="left:34px;top:481.3px;width:168px;height:16.88px;background:#f8f8f8"></div>
<div style="left:34px;top:497.6px;width:168px;height:1px;background:#eeeeee"></div>
<div style="left:201.4px;top:176px;width:1px;height:331px;background:#e9e9e9"></div>
<svg class="i" style="left:49.3px;top:196.10000000000002px" width="13" height="13" viewBox="0 0 13 13"><circle cx="6.5" cy="6.5" r="5.7" fill="#f0f4fb" stroke="#8a92a8" stroke-width="1.4"/><circle cx="6.5" cy="6.5" r="4.2" fill="#fcfdff"/><path d="M6.5 2.8 V6.8 H9.6" stroke="#222" stroke-width="1.2" fill="none"/></svg>
<span class="t " style="left:66.2px;top:195.60000000000002px;font-size:9.9px;color:#2b2b2b;">历史记录模式</span>
<svg class="i" style="left:49.1px;top:212.68px" width="13" height="13" viewBox="0 0 13 13"><path d="M6 0.6 L11 3.2 V8.6 L6 11.2 L1 8.6 V3.2 Z" fill="#e6f8ee" stroke="#1ea85a" stroke-width="1.3"/><path d="M6 0.6 V11.2 M1 3.2 L11 8.6 M11 3.2 L1 8.6" stroke="#1ea85a" stroke-width="1.1"/><path d="M7.4 12.4 L12.8 9.4" stroke="#e0322a" stroke-width="1.4"/></svg>
<span class="t " style="left:66.5px;top:212.48000000000002px;font-size:9.9px;color:#2b2b2b;">模型视图</span>
<svg class="i" style="left:50.7px;top:231.36px" width="11" height="10" viewBox="0 0 11 10"><path d="M0.3 5.4 L2.6 3.4 L4.4 5.8 L8.8 0.2 L10.8 1.8 L4.6 9.8 Z" fill="#2eb83c"/></svg>
<svg class="i" style="left:64.0px;top:230.46px" width="12" height="11" viewBox="0 0 12 11"><path d="M0.8 3 L9.6 0.6 L11.2 8.4 L2.4 10.6 Z" fill="#fff" stroke="#e0322a" stroke-width="1.3"/><rect x="3.6" y="4" width="4.4" height="3.6" fill="#3a4ab0"/><circle cx="8.6" cy="5.6" r="1.5" fill="#5a6ad0"/><path d="M2.4 7.6 L4 8.8" stroke="#333" stroke-width="0.9"/></svg>
<span class="t " style="left:79.4px;top:229.36px;font-size:9.9px;color:#2b2b2b;">摄像机</span>
<svg class="i" style="left:48.5px;top:246.14000000000001px" width="14" height="13" viewBox="0 0 14 13"><g transform="translate(0 2.2)"><path d="M0.6 2.6 H5 L6.2 4 H11.4 V10.4 H0.6 Z" fill="#e6a416" stroke="#9a6c0a" stroke-width="0.8"/><path d="M0.6 10.4 L2.6 5.6 H13.4 L11.4 10.4 Z" fill="#fbd44a" stroke="#a8780c" stroke-width="0.8"/><path d="M3.2 6.7 H12.2" stroke="#fff2a8" stroke-width="1"/></g><path d="M7.4 0.8 H12.4 M7.4 2.8 H12.4" stroke="#3a3ab0" stroke-width="1.1"/></svg>
<span class="t " style="left:66px;top:246.24px;font-size:9.9px;color:#2b2b2b;">用户表达式</span>
<svg class="i" style="left:47.6px;top:264.82px" width="14" height="11" viewBox="0 0 14 11"><path d="M0.6 2.6 H5 L6.2 4 H11.4 V10.4 H0.6 Z" fill="#e6a416" stroke="#9a6c0a" stroke-width="0.8"/><path d="M0.6 10.4 L2.6 5.6 H13.4 L11.4 10.4 Z" fill="#fbd44a" stroke="#a8780c" stroke-width="0.8"/><path d="M3.2 6.7 H12.2" stroke="#fff2a8" stroke-width="1"/></svg>
<span class="t " style="left:66px;top:263.12px;font-size:9.9px;color:#2b2b2b;">模型历史记录</span>
<svg class="i" style="left:67.0px;top:282.0px" width="10" height="10" viewBox="0 0 10 10"><rect x="0.6" y="0.6" width="8.8" height="8.8" fill="#fff" stroke="#222" stroke-width="1.2"/><path d="M2 5 L3.4 3.8 L4.6 5.6 L7.6 1.4 L8.8 2.4 L4.8 8.4 Z" fill="#2eb83c"/></svg>
<svg class="i" style="left:79.3px;top:281.0px" width="13" height="12" viewBox="0 0 13 12"><path d="M1.4 0.6 V10.6" stroke="#222" stroke-width="1.2"/><path d="M1.4 2 L7.4 6.6 L1.4 10.4" fill="none" stroke="#222" stroke-width="1.1"/><path d="M7.4 6.6 L12 4" stroke="#2ea84a" stroke-width="1.1" stroke-dasharray="1.6 1"/><path d="M7 7 L10.6 11" stroke="#e0322a" stroke-width="1.1" stroke-dasharray="1.6 1"/><circle cx="12" cy="3.8" r="0.9" fill="#2ea84a"/><circle cx="10.8" cy="11.2" r="0.9" fill="#e0322a"/></svg>
<span class="t " style="left:95.2px;top:280.0px;font-size:9.9px;color:#2b2b2b;">基准坐标系 (0)</span>
<svg class="i" style="left:67.0px;top:298.88000000000005px" width="10" height="10" viewBox="0 0 10 10"><rect x="0.6" y="0.6" width="8.8" height="8.8" fill="#fff" stroke="#222" stroke-width="1.2"/><path d="M2 5 L3.4 3.8 L4.6 5.6 L7.6 1.4 L8.8 2.4 L4.8 8.4 Z" fill="#2eb83c"/></svg>
<svg class="i" style="left:79.3px;top:297.88000000000005px" width="13" height="12" viewBox="0 0 13 12"><rect x="0.8" y="0.8" width="4.6" height="4.6" fill="#fff" stroke="#222" stroke-width="1.2"/><path d="M0.8 7.2 H5 V11.4 H0.8 Z M7.4 7.2 H12 V11.4 H7.4 Z" fill="#fff" stroke="#222" stroke-width="1.2"/><path d="M7.6 5.4 L11 2" stroke="#e07a2a" stroke-width="1.2"/><circle cx="11.6" cy="1.6" r="1.1" fill="#e07a2a"/></svg>
<span class="t " style="left:95.2px;top:296.88000000000005px;font-size:9.9px;color:#2b2b2b;">草图 (1) "SKETCH_0...</span>
<svg class="i" style="left:67.0px;top:315.76000000000005px" width="10" height="10" viewBox="0 0 10 10"><rect x="0.6" y="0.6" width="8.8" height="8.8" fill="#fff" stroke="#222" stroke-width="1.2"/><path d="M2 5 L3.4 3.8 L4.6 5.6 L7.6 1.4 L8.8 2.4 L4.8 8.4 Z" fill="#2eb83c"/></svg>
<svg class="i" style="left:79.3px;top:314.76000000000005px" width="13" height="12" viewBox="0 0 13 12"><path d="M0.6 1.6 L3.4 0.6 H9.6 L12.4 1.6 V10 L9.6 11.2 H3.4 L0.6 10 Z" fill="#f08a1e"/><path d="M2.6 1.6 V10.4 M10.2 1.6 V10.4" stroke="#fbd08a" stroke-width="1.1"/><rect x="4.6" y="1.6" width="3.6" height="8.6" fill="#fbe0b0"/><path d="M6.4 1.4 V10.4" stroke="#e07a10" stroke-width="1"/><path d="M0.6 10 L3.4 11.2 H9.6 L12.4 10 V11 L9.6 12 H3.4 L0.6 11 Z" fill="#6a7ad8"/></svg>
<span class="t " style="left:95.2px;top:313.76000000000005px;font-size:9.9px;color:#2b2b2b;"><b>拉伸 (2)</b></span>
<svg class="i" style="left:33px;top:190px" width="60" height="150" viewBox="33 190 60 150" shape-rendering="crispEdges"><g stroke="#b4b4b4" stroke-width="1" stroke-dasharray="1 1" fill="none"><path d="M41.5 202.60000000000002V267.12"/><path d="M41.5 202.60000000000002H49"/><path d="M44 219.48000000000002H48"/><path d="M44 236.36H50"/><path d="M41.5 253.24H48"/><path d="M45 270.12H48"/><path d="M57.5 276.12V320.76000000000005"/><path d="M57.5 287.0H66"/><path d="M57.5 303.88000000000005H66"/><path d="M57.5 320.76000000000005H66"/></g><g stroke="#222" stroke-width="1"><path d="M39 219.48000000000002H44M41.5 216.98000000000002V221.98000000000002"/><path d="M39 236.36H44M41.5 233.86V238.86"/><path d="M39.5 270.12H43.5" stroke="#666"/></g></svg>
<div style="left:34px;top:507.6px;width:173px;height:14.4px;background:#f0f0f0"></div>
<div style="left:49.4px;top:508.2px;width:69.8px;height:12.8px;background:linear-gradient(180deg,#f6f6f6 0%,#e9e9e9 45%,#d6d6d6 100%);border:1px solid #a2a2a2;box-sizing:border-box;border-radius:2px"></div>
<svg class="i" style="left:38.6px;top:512px" width="3.6" height="5" viewBox="0 0 4 6"><path d="M4 0V6L0 3Z" fill="#333"/></svg>
<svg class="i" style="left:195.6px;top:512px" width="3.6" height="5" viewBox="0 0 4 6"><path d="M0 0V6L4 3Z" fill="#333"/></svg>
<svg class="i" style="left:81px;top:512px" width="6" height="5" viewBox="0 0 6 5"><path d="M0.5 0V5M2.5 0V5M4.5 0V5" stroke="#555" stroke-width="1"/></svg>
<div style="left:32.5px;top:522.4px;width:174px;height:4.6px;background:linear-gradient(180deg,#a8a8a8,#bcbcbc)"></div>
<span class="t " style="left:38.3px;top:531.7px;font-size:11.55px;color:#2d7fb6;">相依性</span>
<svg class="i" style="left:192.6px;top:533.3px" width="9" height="8" viewBox="0 0 9 8"><path d="M1 1L4.5 6.6L8 1" stroke="#2b8ad2" stroke-width="1.7" fill="none"/></svg>
<span class="t " style="left:38.3px;top:551.5px;font-size:11.55px;color:#2d7fb6;">细节</span>
<svg class="i" style="left:192.6px;top:553px" width="9" height="8" viewBox="0 0 9 8"><path d="M1 1L4.5 6.6L8 1" stroke="#2b8ad2" stroke-width="1.7" fill="none"/></svg>
<span class="t " style="left:38.3px;top:572.0px;font-size:11.55px;color:#2d7fb6;">预览</span>
<svg class="i" style="left:192.6px;top:573px" width="9" height="8" viewBox="0 0 9 8"><path d="M1 1L4.5 6.6L8 1" stroke="#2b8ad2" stroke-width="1.7" fill="none"/></svg>
<div style="left:32.5px;top:546.6px;width:174px;height:1.2px;background:#c9c9c9"></div>
<div style="left:32.5px;top:566.6px;width:174px;height:1.2px;background:#c9c9c9"></div>
<div style="left:32.5px;top:586.6px;width:174px;height:1.2px;background:#c9c9c9"></div>
<svg class="i" style="left:0;top:0" width="1000" height="610" viewBox="0 0 1000 610">
<defs>
<linearGradient id="cylg" x1="0" x2="1" y1="0" y2="0">
<stop offset="0" stop-color="#b86d05"/><stop offset="0.11" stop-color="#bd7003"/><stop offset="0.22" stop-color="#c87800"/><stop offset="0.31" stop-color="#dc8400"/>
<stop offset="0.40" stop-color="#ec8e00"/><stop offset="0.48" stop-color="#f19300"/><stop offset="0.61" stop-color="#f89800"/><stop offset="0.70" stop-color="#f69600"/>
<stop offset="0.88" stop-color="#ee8e00"/><stop offset="0.965" stop-color="#e48a00"/><stop offset="1" stop-color="#e08700"/>
</linearGradient>
<clipPath id="lowhalf"><path d="M400 492.5L426.5 490.8L649.5 483.2L700 481V540H400Z"/></clipPath>
</defs>
<!-- blue sketch circle -->
<g clip-path="url(#lowhalf)"><ellipse cx="537.7" cy="486.8" rx="111.3" ry="20.5" transform="rotate(-1.93 537.7 486.8)" fill="none" stroke="#4254e2" stroke-width="1.7"/></g>
<!-- body -->
<path d="M419.6 274.2 L428.2 487.5 A110.2 16.8 -2.6 0 0 648.4 477.5 L639.9 266.3 Z" fill="url(#cylg)"/>
<path d="M428.2 487.5 A110.2 16.8 -2.6 0 0 648.4 477.5" fill="none" stroke="#8a5a10" stroke-width="0.7" opacity="0.7"/>
<!-- top face -->
<ellipse cx="529.9" cy="270.5" rx="110.1" ry="18.4" transform="rotate(-2.05 529.9 270.5)" fill="#feb101" stroke="#5a4300" stroke-width="0.7"/>
<!-- datum csys wireframe -->
<g fill="none" stroke="#f0dfc6" stroke-width="1.1" stroke-linejoin="round">
<path d="M535.2 385 L538.8 488.4"/>
<path d="M537.4 432.6 H592 L594.6 488.4 H538.7"/>
<path d="M537.4 432.6 L527.2 440.4 L529.6 495 L538.7 488.4"/>
<path d="M529.6 495 L523.5 500.2"/>
<path d="M594.6 488.4 L583 496.7 L529.6 495"/>
<path d="M594.6 488.4 L637 487.6"/>
</g>
<path d="M535 380 L533 389.4 H537.2 Z" fill="#d6d0cc"/>
<text x="531.2" y="377" font-size="8.5" fill="#ddd6d0" font-family="Liberation Sans, sans-serif">Z</text>
<path d="M635.4 487.4 L645.6 485.6 L645.8 487.6 L636 489.6 Z" fill="#2a38c8"/>
<path d="M520.3 506 L523.6 503.6 L524.2 505.4 Z" fill="#3346d8" stroke="#3346d8" stroke-width="1"/>
<text x="514.5" y="512" font-size="9" fill="#4253d6" font-family="Liberation Sans, sans-serif">X</text>
<text x="651" y="490.5" font-size="9" fill="#5f6fd8" font-family="Liberation Sans, sans-serif">Y</text>
<!-- view triad -->
<path d="M254.7 535.8 H269 V554 H254.7 Z" fill="#c9caca" stroke="#d9dada" stroke-width="0.8"/>
<path d="M250.8 538 L254.7 535.8 V554 L250.8 555.5 Z" fill="#bdbebf"/>
<path d="M253 547 V534" stroke="#6a6fe0" stroke-width="1.2"/>
<path d="M253 526.5 L251.6 536.5 H254.4 Z" fill="#3340d8"/>
<path d="M269.5 551.3 H274" stroke="#3b9a4a" stroke-width="1.2"/>
<path d="M279.6 551.3 L271.5 549.9 V552.7 Z" fill="#2f9a45"/>
<text x="250" y="524.5" font-size="8.5" fill="#5a5fe0" font-family="Liberation Sans, sans-serif">Z</text>
<text x="281" y="554.5" font-size="8.5" fill="#6f9f78" font-family="Liberation Sans, sans-serif">Y</text>
<text x="246.3" y="559.5" font-size="8.5" fill="#e0504a" font-family="Liberation Sans, sans-serif">X</text>
</svg>
<div style="left:0px;top:593px;width:1000px;height:17px;background:#fff"></div>
<div style="left:0px;top:592.6px;width:1000px;height:1px;background:#d0d0d0"></div>
<span class="t " style="left:3px;top:596.1px;font-size:9.33px;color:#111;font-weight:bold">选择对象并使用 MB3，或者双击某一对象</span>
</div></body></html>
